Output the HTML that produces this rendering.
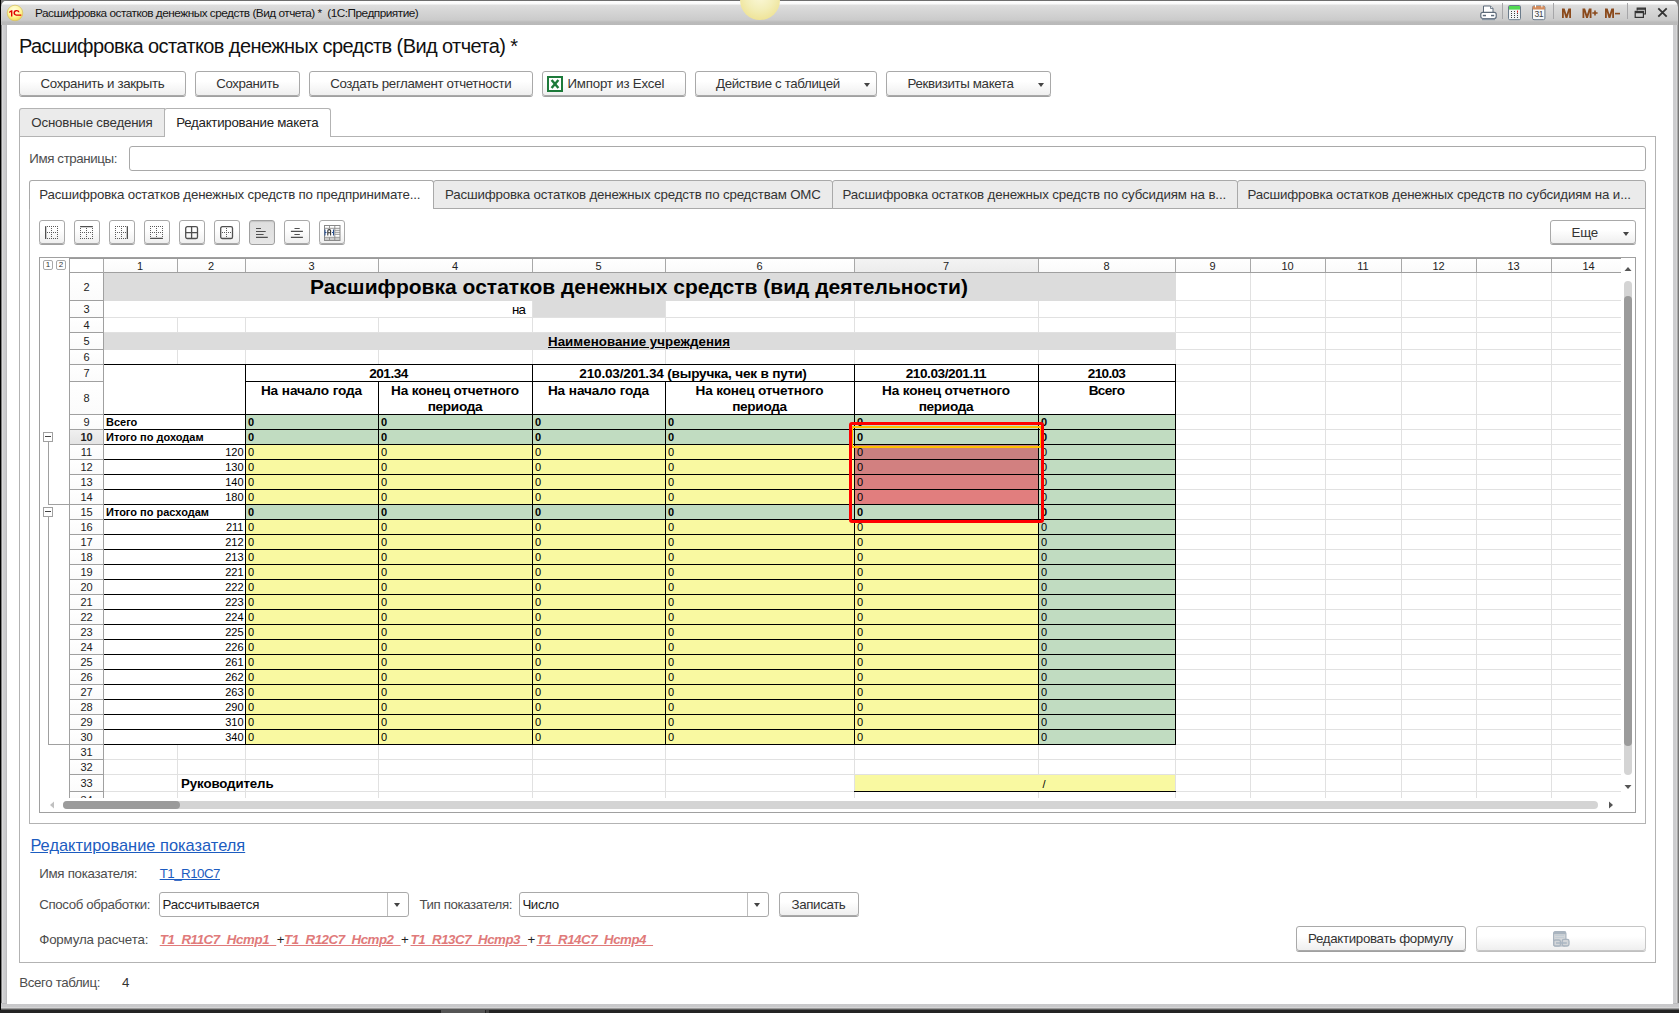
<!DOCTYPE html><html><head><meta charset="utf-8"><style>
html,body{margin:0;padding:0;}
body{width:1679px;height:1013px;position:relative;overflow:hidden;background:#232323;font-family:"Liberation Sans", sans-serif;}
.btn{position:absolute;box-sizing:border-box;border:1px solid #a9a9a9;border-radius:3px;background:linear-gradient(#ffffff 0%,#ffffff 40%,#efefef 100%);box-shadow:0 1px 0 #a0a0a0;}
.arr{position:absolute;width:0;height:0;border-left:3.5px solid transparent;border-right:3.5px solid transparent;border-top:4px solid #444;}
.fld{position:absolute;box-sizing:border-box;border:1px solid #a9a9a9;border-radius:3px;background:#fff;}
</style></head><body>
<div style="position:absolute;left:0px;top:0px;width:1679px;height:1013px;background:#232323;"></div>
<div style="position:absolute;left:0px;top:0px;width:1px;height:1010px;background:#000;"></div>
<div style="position:absolute;left:1px;top:0px;width:1678px;height:1010px;background:linear-gradient(90deg,#808080 0,#808080 1px,#e2e2e2 1px,#d0d0d2 2px,#c8c8ca 5px,#b4b4b6 6px,#b4b4b6 7px,transparent 7px);"></div>
<div style="position:absolute;left:1672px;top:0px;width:7px;height:1010px;background:linear-gradient(90deg,#b0b0b2 0,#cdcdcf 1px,#cdcdcf 4px,#e0e0e0 5px,#777 6px);"></div>
<div style="position:absolute;left:1px;top:1003px;width:1678px;height:7px;background:linear-gradient(#b0b0b2 0,#c8c8ca 1px,#c9c9cb 4px,#e0e0e0 5px,#5a5a5a 6px);"></div>
<div style="position:absolute;left:0px;top:1010px;width:1679px;height:3px;background:#232323;"></div>
<div style="position:absolute;left:441px;top:1010px;width:44px;height:3px;background:#555;"></div>
<div style="position:absolute;left:486px;top:1010px;width:3px;height:3px;background:#444;"></div>
<div style="position:absolute;left:1px;top:0px;width:9px;height:9px;background:#787878;"></div>
<div style="position:absolute;left:1669px;top:0px;width:10px;height:9px;background:#787878;"></div>
<div style="position:absolute;left:1px;top:0px;width:1677px;height:25px;background:linear-gradient(#6e6e6e 0,#6e6e6e 1px,#fdfdfd 1px,#fbfbfb 4px,#dedede 5px,#d7d7d7 10px,#cbcbcb 20px,#bbbbbb 22px,#b9b9b9 25px);border-top-left-radius:7px;border-top-right-radius:7px;"></div>
<div style="position:absolute;left:7px;top:25px;width:1666px;height:979px;background:#fff;"></div>
<div style="position:absolute;left:740px;top:-20px;width:40px;height:40px;border-radius:50%;background:radial-gradient(circle at 50% 40%,#fbf8d8 0,#f3eeb8 45%,#efe49a 75%,#f0d468 92%,rgba(240,205,90,0.6) 100%);"></div>
<svg style="position:absolute;left:6px;top:4px" width="18" height="18" viewBox="0 0 18 18"><defs><radialGradient id="lg" cx="45%" cy="30%" r="70%"><stop offset="0" stop-color="#fffde0"/><stop offset="0.6" stop-color="#fff79a"/><stop offset="1" stop-color="#f4d850"/></radialGradient></defs><circle cx="9" cy="9" r="7.8" fill="url(#lg)" stroke="#d9c468" stroke-width="0.8"/><path d="M3.3 7.6 L5.3 6.2 H6.4 V12.4 H5 V8 L3.3 8.9 Z" fill="#e00000"/><path d="M13.6 8.2 A3.1 2.9 0 1 0 10.2 11.7 H15.3 V10.5 H10.4 A1.7 1.6 0 1 1 12.2 8.2 Z" fill="#e00000"/></svg>
<div style="position:absolute;left:35px;top:8px;font-size:11.8px;color:#151515;font-weight:400;white-space:nowrap;line-height:1;"><span id="t0" style="letter-spacing:-0.493px;">Расшифровка остатков денежных средств (Вид отчета) *&nbsp; (1С:Предприятие)</span></div>
<svg style="position:absolute;left:1480px;top:5px" width="17" height="16" viewBox="0 0 17 16"><path d="M3.5 1 H10.5 L13 3.5 V8 H3.5 Z" fill="#fff" stroke="#5d6b7a" stroke-width="1"/><path d="M10.5 1 V3.5 H13" fill="#dfe3e8" stroke="#5d6b7a" stroke-width="0.8"/><rect x="0.8" y="7.3" width="15.4" height="6.2" rx="2" fill="#fff" stroke="#5d6b7a" stroke-width="1.2"/><rect x="2.8" y="9.8" width="3.2" height="1.5" fill="#5d6b7a"/><rect x="11" y="9.8" width="3.2" height="1.5" fill="#5d6b7a"/><rect x="2" y="13.6" width="13" height="1.6" fill="#8794a2"/></svg>
<div style="position:absolute;left:1502px;top:3px;width:1px;height:16px;background:#a6a6a8;"></div>
<svg style="position:absolute;left:1508px;top:5px" width="14" height="16" viewBox="0 0 14 16"><rect x="0.5" y="0.5" width="12" height="14.2" rx="1.2" fill="#f2f4f6" stroke="#6b7b8b" stroke-width="1"/><rect x="1" y="1" width="11" height="3.6" fill="#52d952"/><rect x="3" y="6" width="1" height="1" fill="#404040"/><rect x="3" y="8" width="1" height="1" fill="#404040"/><rect x="3" y="10" width="1" height="1" fill="#404040"/><rect x="3" y="12" width="1" height="1" fill="#404040"/><rect x="6" y="6" width="1" height="1" fill="#404040"/><rect x="6" y="8" width="1" height="1" fill="#404040"/><rect x="6" y="10" width="1" height="1" fill="#404040"/><rect x="6" y="12" width="1" height="1" fill="#404040"/><rect x="9" y="8" width="1" height="1" fill="#404040"/><rect x="9" y="10" width="1" height="1" fill="#404040"/><rect x="9" y="12" width="1" height="1" fill="#404040"/><rect x="9" y="5.6" width="1" height="2" fill="#e02020"/></svg>
<svg style="position:absolute;left:1532px;top:5px" width="14" height="16" viewBox="0 0 14 16"><rect x="0.5" y="1" width="12.4" height="13.7" rx="1.5" fill="#f8fafc" stroke="#6b7b8b" stroke-width="1"/><path d="M0.5 4.6 V2.5 Q0.5 1 2 1 H11.4 Q12.9 1 12.9 2.5 V4.6 Z" fill="#d48c5c"/><rect x="3" y="0" width="1" height="2.4" fill="#fff"/><rect x="9.4" y="0" width="1" height="2.4" fill="#fff"/><text x="2.4" y="12.4" font-family="Liberation Sans" font-size="8.6" fill="#404040" letter-spacing="-0.4">31</text></svg>
<div style="position:absolute;left:1553px;top:3px;width:1px;height:16px;background:#a6a6a8;"></div>
<svg style="position:absolute;left:1561px;top:7px" width="62" height="12" viewBox="0 0 62 12"><path d="M1 11 V1.5 H3.6 L5.5 7.5 L7.4 1.5 H10 V11 H8.2 V5 L6.4 11 H4.6 L2.8 5 V11 Z" fill="#8b4a1c"/><path d="M21.5 11 V1.5 H24.1 L26 7.5 L27.9 1.5 H30.5 V11 H28.7 V5 L26.9 11 H25.1 L23.3 5 V11 Z" fill="#8b4a1c"/><path d="M31.3 6 H36.6 M34 3.5 V8.5" stroke="#8b4a1c" stroke-width="1.6"/><path d="M44 11 V1.5 H46.6 L48.5 7.5 L50.4 1.5 H53 V11 H51.2 V5 L49.4 11 H47.6 L45.8 5 V11 Z" fill="#8b4a1c"/><path d="M54 6.6 H59" stroke="#8b4a1c" stroke-width="1.6"/></svg>
<div style="position:absolute;left:1627px;top:3px;width:1px;height:16px;background:#a6a6a8;"></div>
<svg style="position:absolute;left:1634px;top:7px" width="13" height="12" viewBox="0 0 13 12"><path d="M3.2 3.5 V1.2 H11.4 V7 H9.6" fill="none" stroke="#333" stroke-width="1.2"/><rect x="1.2" y="4.4" width="8.2" height="6" fill="none" stroke="#333" stroke-width="1.2"/><rect x="1.2" y="4.4" width="8.2" height="1.8" fill="#333"/><rect x="3.2" y="1.2" width="8.2" height="1.6" fill="#333"/></svg>
<svg style="position:absolute;left:1657px;top:7px" width="11" height="11" viewBox="0 0 11 11"><path d="M1.3 1.3 L9.7 9.7 M9.7 1.3 L1.3 9.7" stroke="#333" stroke-width="1.8"/></svg>
<div style="position:absolute;left:19px;top:36px;font-size:20px;color:#111;font-weight:400;white-space:nowrap;line-height:1;"><span id="t1" style="letter-spacing:-0.598px;">Расшифровка остатков денежных средств (Вид отчета) *</span></div>
<div class="btn" style="left:19px;top:71px;width:167px;height:25px"></div>
<div style="position:absolute;left:40.5px;top:77px;font-size:13.3px;color:#333;font-weight:400;white-space:nowrap;line-height:1;"><span id="t2" style="letter-spacing:-0.330px;">Сохранить и закрыть</span></div>
<div class="btn" style="left:195px;top:71px;width:105px;height:25px"></div>
<div style="position:absolute;left:216.2px;top:77px;font-size:13.3px;color:#333;font-weight:400;white-space:nowrap;line-height:1;"><span id="t3" style="letter-spacing:-0.398px;">Сохранить</span></div>
<div class="btn" style="left:309px;top:71px;width:224px;height:25px"></div>
<div style="position:absolute;left:330.2px;top:77px;font-size:13.3px;color:#333;font-weight:400;white-space:nowrap;line-height:1;"><span id="t4" style="letter-spacing:-0.331px;">Создать регламент отчетности</span></div>
<div class="btn" style="left:542px;top:71px;width:144px;height:25px"></div>
<div style="position:absolute;left:567.5px;top:77px;font-size:13.3px;color:#333;font-weight:400;white-space:nowrap;line-height:1;"><span id="t5" style="letter-spacing:-0.215px;">Импорт из Excel</span></div>
<svg style="position:absolute;left:547px;top:76px" width="16" height="16" viewBox="0 0 16 16"><rect x="1" y="1" width="14" height="14" fill="#fff" stroke="#1d7a3a" stroke-width="2"/><path d="M4.6 4 L11.4 12 M11.4 4 L4.6 12" stroke="#1d7a3a" stroke-width="2.4"/></svg>
<div class="btn" style="left:695px;top:71px;width:182px;height:25px"></div>
<div class="arr" style="left:864px;top:83px"></div>
<div style="position:absolute;left:716px;top:77px;font-size:13.3px;color:#333;font-weight:400;white-space:nowrap;line-height:1;"><span id="t6" style="letter-spacing:-0.344px;">Действие с таблицей</span></div>
<div class="btn" style="left:886px;top:71px;width:165px;height:25px"></div>
<div class="arr" style="left:1038px;top:83px"></div>
<div style="position:absolute;left:907.5px;top:77px;font-size:13.3px;color:#333;font-weight:400;white-space:nowrap;line-height:1;"><span id="t7" style="letter-spacing:-0.354px;">Реквизиты макета</span></div>
<div style="position:absolute;left:19px;top:136px;width:1637px;height:827px;box-sizing:border-box;border:1px solid #b3b3b3;background:#fff;"></div>
<div style="position:absolute;left:19px;top:108px;width:146px;height:28px;box-sizing:border-box;border:1px solid #b3b3b3;border-bottom:none;border-top-left-radius:3px;background:#ebebeb;"></div>
<div style="position:absolute;left:164px;top:108px;width:167px;height:29px;box-sizing:border-box;border:1px solid #b3b3b3;border-bottom:none;border-top-left-radius:3px;border-top-right-radius:3px;background:#fff;"></div>
<div style="position:absolute;left:31.3px;top:116px;font-size:13.3px;color:#333;font-weight:400;white-space:nowrap;line-height:1;"><span id="t8" style="letter-spacing:-0.193px;">Основные сведения</span></div>
<div style="position:absolute;left:176.2px;top:116px;font-size:13.3px;color:#222;font-weight:400;white-space:nowrap;line-height:1;"><span id="t9" style="letter-spacing:-0.266px;">Редактирование макета</span></div>
<div style="position:absolute;left:29.3px;top:152px;font-size:13.3px;color:#4d4d4d;font-weight:400;white-space:nowrap;line-height:1;"><span id="t10" style="letter-spacing:-0.382px;">Имя страницы:</span></div>
<div class="fld" style="left:129px;top:146px;width:1517px;height:25px"></div>
<div style="position:absolute;left:29px;top:208px;width:1617px;height:616px;box-sizing:border-box;border:1px solid #b3b3b3;background:#fff;"></div>
<div style="position:absolute;left:29px;top:180px;width:405px;height:29px;box-sizing:border-box;border:1px solid #a9a9a9;border-bottom:none;border-top-left-radius:3px;border-top-right-radius:3px;background:#fff;"></div>
<div style="position:absolute;left:39.3px;top:188px;font-size:13.3px;color:#333;font-weight:400;white-space:nowrap;line-height:1;"><span id="t11" style="letter-spacing:-0.181px;">Расшифровка остатков денежных средств по предпринимате...</span></div>
<div style="position:absolute;left:433px;top:180px;width:400px;height:29px;box-sizing:border-box;border:1px solid #a9a9a9;border-top-left-radius:3px;border-top-right-radius:3px;background:#ebebeb;"></div>
<div style="position:absolute;left:444.9px;top:188px;font-size:13.3px;color:#333;font-weight:400;white-space:nowrap;line-height:1;"><span id="t12" style="letter-spacing:-0.156px;">Расшифровка остатков денежных средств по средствам ОМС</span></div>
<div style="position:absolute;left:832px;top:180px;width:406px;height:29px;box-sizing:border-box;border:1px solid #a9a9a9;border-top-left-radius:3px;border-top-right-radius:3px;background:#ebebeb;"></div>
<div style="position:absolute;left:842.5px;top:188px;font-size:13.3px;color:#333;font-weight:400;white-space:nowrap;line-height:1;"><span id="t13" style="letter-spacing:-0.133px;">Расшифровка остатков денежных средств по субсидиям на в...</span></div>
<div style="position:absolute;left:1237px;top:180px;width:409px;height:29px;box-sizing:border-box;border:1px solid #a9a9a9;border-top-left-radius:3px;border-top-right-radius:3px;background:#ebebeb;"></div>
<div style="position:absolute;left:1247.4px;top:188px;font-size:13.3px;color:#333;font-weight:400;white-space:nowrap;line-height:1;"><span id="t14" style="letter-spacing:-0.141px;">Расшифровка остатков денежных средств по субсидиям на и...</span></div>
<div style="position:absolute;left:30px;top:208px;width:403px;height:1px;background:#fff;"></div>
<div class="btn" style="left:39px;top:220px;width:26px;height:24px"></div>
<div class="btn" style="left:74px;top:220px;width:26px;height:24px"></div>
<div class="btn" style="left:109px;top:220px;width:26px;height:24px"></div>
<div class="btn" style="left:144px;top:220px;width:26px;height:24px"></div>
<div class="btn" style="left:179px;top:220px;width:26px;height:24px"></div>
<div class="btn" style="left:214px;top:220px;width:26px;height:24px"></div>
<div class="btn" style="left:249px;top:220px;width:26px;height:25px;background:linear-gradient(#dedede,#e6e6e6);box-shadow:inset 0 1px 1px rgba(0,0,0,0.12);border-color:#a0a0a0"></div>
<div class="btn" style="left:284px;top:220px;width:26px;height:24px"></div>
<div class="btn" style="left:319px;top:220px;width:26px;height:24px"></div>
<svg style="position:absolute;left:45px;top:226px" width="14" height="14" viewBox="0 0 14 14"><rect x="6" y="12" width="1" height="1" fill="#5a5a5a"/><rect x="12" y="4" width="1" height="1" fill="#5a5a5a"/><rect x="4" y="0" width="1" height="1" fill="#5a5a5a"/><rect x="12" y="10" width="1" height="1" fill="#5a5a5a"/><rect x="4" y="6" width="1" height="1" fill="#5a5a5a"/><rect x="4" y="12" width="1" height="1" fill="#5a5a5a"/><rect x="8" y="0" width="1" height="1" fill="#5a5a5a"/><rect x="10" y="0" width="1" height="1" fill="#5a5a5a"/><rect x="10" y="6" width="1" height="1" fill="#5a5a5a"/><rect x="8" y="6" width="1" height="1" fill="#5a5a5a"/><rect x="8" y="12" width="1" height="1" fill="#5a5a5a"/><rect x="10" y="12" width="1" height="1" fill="#5a5a5a"/><rect x="6" y="2" width="1" height="1" fill="#5a5a5a"/><rect x="6" y="8" width="1" height="1" fill="#5a5a5a"/><rect x="12" y="0" width="1" height="1" fill="#5a5a5a"/><rect x="12" y="6" width="1" height="1" fill="#5a5a5a"/><rect x="12" y="12" width="1" height="1" fill="#5a5a5a"/><rect x="6" y="4" width="1" height="1" fill="#5a5a5a"/><rect x="6" y="10" width="1" height="1" fill="#5a5a5a"/><rect x="12" y="2" width="1" height="1" fill="#5a5a5a"/><rect x="12" y="8" width="1" height="1" fill="#5a5a5a"/><rect x="2" y="0" width="1" height="1" fill="#5a5a5a"/><rect x="2" y="6" width="1" height="1" fill="#5a5a5a"/><rect x="2" y="12" width="1" height="1" fill="#5a5a5a"/><rect x="6" y="0" width="1" height="1" fill="#5a5a5a"/><rect x="6" y="6" width="1" height="1" fill="#5a5a5a"/><rect x="0" y="0" width="1.3" height="13" rx="0.6" fill="#505050"/></svg>
<svg style="position:absolute;left:80px;top:226px" width="14" height="14" viewBox="0 0 14 14"><rect x="6" y="12" width="1" height="1" fill="#5a5a5a"/><rect x="12" y="4" width="1" height="1" fill="#5a5a5a"/><rect x="12" y="10" width="1" height="1" fill="#5a5a5a"/><rect x="4" y="6" width="1" height="1" fill="#5a5a5a"/><rect x="4" y="12" width="1" height="1" fill="#5a5a5a"/><rect x="0" y="2" width="1" height="1" fill="#5a5a5a"/><rect x="10" y="6" width="1" height="1" fill="#5a5a5a"/><rect x="8" y="6" width="1" height="1" fill="#5a5a5a"/><rect x="8" y="12" width="1" height="1" fill="#5a5a5a"/><rect x="0" y="8" width="1" height="1" fill="#5a5a5a"/><rect x="10" y="12" width="1" height="1" fill="#5a5a5a"/><rect x="6" y="2" width="1" height="1" fill="#5a5a5a"/><rect x="6" y="8" width="1" height="1" fill="#5a5a5a"/><rect x="12" y="6" width="1" height="1" fill="#5a5a5a"/><rect x="12" y="12" width="1" height="1" fill="#5a5a5a"/><rect x="0" y="4" width="1" height="1" fill="#5a5a5a"/><rect x="0" y="10" width="1" height="1" fill="#5a5a5a"/><rect x="6" y="4" width="1" height="1" fill="#5a5a5a"/><rect x="6" y="10" width="1" height="1" fill="#5a5a5a"/><rect x="12" y="2" width="1" height="1" fill="#5a5a5a"/><rect x="12" y="8" width="1" height="1" fill="#5a5a5a"/><rect x="0" y="6" width="1" height="1" fill="#5a5a5a"/><rect x="0" y="12" width="1" height="1" fill="#5a5a5a"/><rect x="2" y="6" width="1" height="1" fill="#5a5a5a"/><rect x="2" y="12" width="1" height="1" fill="#5a5a5a"/><rect x="6" y="6" width="1" height="1" fill="#5a5a5a"/><rect x="0" y="0" width="13" height="1.3" rx="0.6" fill="#505050"/></svg>
<svg style="position:absolute;left:115px;top:226px" width="14" height="14" viewBox="0 0 14 14"><rect x="6" y="12" width="1" height="1" fill="#5a5a5a"/><rect x="4" y="0" width="1" height="1" fill="#5a5a5a"/><rect x="4" y="6" width="1" height="1" fill="#5a5a5a"/><rect x="4" y="12" width="1" height="1" fill="#5a5a5a"/><rect x="8" y="0" width="1" height="1" fill="#5a5a5a"/><rect x="0" y="2" width="1" height="1" fill="#5a5a5a"/><rect x="10" y="0" width="1" height="1" fill="#5a5a5a"/><rect x="10" y="6" width="1" height="1" fill="#5a5a5a"/><rect x="8" y="6" width="1" height="1" fill="#5a5a5a"/><rect x="8" y="12" width="1" height="1" fill="#5a5a5a"/><rect x="0" y="8" width="1" height="1" fill="#5a5a5a"/><rect x="10" y="12" width="1" height="1" fill="#5a5a5a"/><rect x="6" y="2" width="1" height="1" fill="#5a5a5a"/><rect x="6" y="8" width="1" height="1" fill="#5a5a5a"/><rect x="0" y="4" width="1" height="1" fill="#5a5a5a"/><rect x="0" y="10" width="1" height="1" fill="#5a5a5a"/><rect x="6" y="4" width="1" height="1" fill="#5a5a5a"/><rect x="6" y="10" width="1" height="1" fill="#5a5a5a"/><rect x="0" y="0" width="1" height="1" fill="#5a5a5a"/><rect x="2" y="0" width="1" height="1" fill="#5a5a5a"/><rect x="0" y="6" width="1" height="1" fill="#5a5a5a"/><rect x="0" y="12" width="1" height="1" fill="#5a5a5a"/><rect x="2" y="6" width="1" height="1" fill="#5a5a5a"/><rect x="2" y="12" width="1" height="1" fill="#5a5a5a"/><rect x="6" y="0" width="1" height="1" fill="#5a5a5a"/><rect x="6" y="6" width="1" height="1" fill="#5a5a5a"/><rect x="11.7" y="0" width="1.3" height="13" rx="0.6" fill="#505050"/></svg>
<svg style="position:absolute;left:150px;top:226px" width="14" height="14" viewBox="0 0 14 14"><rect x="12" y="4" width="1" height="1" fill="#5a5a5a"/><rect x="4" y="0" width="1" height="1" fill="#5a5a5a"/><rect x="12" y="10" width="1" height="1" fill="#5a5a5a"/><rect x="4" y="6" width="1" height="1" fill="#5a5a5a"/><rect x="8" y="0" width="1" height="1" fill="#5a5a5a"/><rect x="0" y="2" width="1" height="1" fill="#5a5a5a"/><rect x="10" y="0" width="1" height="1" fill="#5a5a5a"/><rect x="10" y="6" width="1" height="1" fill="#5a5a5a"/><rect x="8" y="6" width="1" height="1" fill="#5a5a5a"/><rect x="0" y="8" width="1" height="1" fill="#5a5a5a"/><rect x="6" y="2" width="1" height="1" fill="#5a5a5a"/><rect x="6" y="8" width="1" height="1" fill="#5a5a5a"/><rect x="12" y="0" width="1" height="1" fill="#5a5a5a"/><rect x="12" y="6" width="1" height="1" fill="#5a5a5a"/><rect x="0" y="4" width="1" height="1" fill="#5a5a5a"/><rect x="0" y="10" width="1" height="1" fill="#5a5a5a"/><rect x="6" y="4" width="1" height="1" fill="#5a5a5a"/><rect x="6" y="10" width="1" height="1" fill="#5a5a5a"/><rect x="12" y="2" width="1" height="1" fill="#5a5a5a"/><rect x="12" y="8" width="1" height="1" fill="#5a5a5a"/><rect x="0" y="0" width="1" height="1" fill="#5a5a5a"/><rect x="2" y="0" width="1" height="1" fill="#5a5a5a"/><rect x="0" y="6" width="1" height="1" fill="#5a5a5a"/><rect x="2" y="6" width="1" height="1" fill="#5a5a5a"/><rect x="6" y="0" width="1" height="1" fill="#5a5a5a"/><rect x="6" y="6" width="1" height="1" fill="#5a5a5a"/><rect x="0" y="11.7" width="13" height="1.3" rx="0.6" fill="#505050"/></svg>
<svg style="position:absolute;left:185px;top:226px" width="14" height="14" viewBox="0 0 14 14"><rect x="0.7" y="0.7" width="11.8" height="11.8" rx="1.6" fill="none" stroke="#505050" stroke-width="1.3"/><path d="M6.6 0.7 V12.5 M0.7 6.6 H12.5" stroke="#505050" stroke-width="1.3"/></svg>
<svg style="position:absolute;left:220px;top:226px" width="14" height="14" viewBox="0 0 14 14"><rect x="0.7" y="0.7" width="11.8" height="11.8" rx="1.6" fill="none" stroke="#505050" stroke-width="1.3"/><rect x="2" y="6" width="1" height="1" fill="#5a5a5a"/><rect x="6" y="2" width="1" height="1" fill="#5a5a5a"/><rect x="4" y="6" width="1" height="1" fill="#5a5a5a"/><rect x="6" y="4" width="1" height="1" fill="#5a5a5a"/><rect x="6" y="6" width="1" height="1" fill="#5a5a5a"/><rect x="6" y="6" width="1" height="1" fill="#5a5a5a"/><rect x="8" y="6" width="1" height="1" fill="#5a5a5a"/><rect x="6" y="8" width="1" height="1" fill="#5a5a5a"/><rect x="10" y="6" width="1" height="1" fill="#5a5a5a"/><rect x="6" y="10" width="1" height="1" fill="#5a5a5a"/></svg>
<svg style="position:absolute;left:255px;top:226px" width="14" height="14" viewBox="0 0 14 14"><path d="M1 2.5 H6 M1 5.5 H10.7 M1 8.5 H8.6 M1 11.4 H12.8" stroke="#505050" stroke-width="1.1"/></svg>
<svg style="position:absolute;left:290px;top:226px" width="14" height="14" viewBox="0 0 14 14"><path d="M4.5 2.5 H9.7 M0.9 5.4 H12.9 M4.4 8.5 H9.8 M0.9 11.4 H12.9" stroke="#505050" stroke-width="1.1"/></svg>
<svg style="position:absolute;left:324px;top:225px" width="17" height="16" viewBox="0 0 17 16"><rect x="0.5" y="0.5" width="15.5" height="15" fill="#fff" stroke="#8a8a8a" stroke-width="1"/><path d="M0.5 3.3 H16 M10.8 5.3 H16 M10.8 7.3 H16 M10.8 9.3 H16 M0.5 12.3 H16 M0.5 14 H16 M5.5 0.5 V3.3 M5.5 12.3 V15.5 M10.8 0.5 V15.5" stroke="#8a8a8a" stroke-width="0.9"/><path d="M1 4.5 V10.5 M1 7.5 H2.5 M9.5 4.5 V10.5 M8 7.5 H9.5" stroke="#2a5090" stroke-width="1.1"/><path d="M3.8 10.5 V5.8 Q3.8 4.6 5.2 4.6 Q6.6 4.6 6.6 5.8 V10.5 M3.8 7.8 H6.6" fill="none" stroke="#333" stroke-width="1.1"/></svg>
<div class="btn" style="left:1550px;top:220px;width:86px;height:24px"></div>
<div class="arr" style="left:1623px;top:232px"></div>
<div style="position:absolute;left:1571.4px;top:226px;font-size:13.3px;color:#333;font-weight:400;white-space:nowrap;line-height:1;"><span id="t15" style="letter-spacing:-0.121px;">Еще</span></div>
<div style="position:absolute;left:39px;top:257px;width:1597px;height:556px;box-sizing:border-box;border:1px solid #a0a0a0;background:#fff;"></div>
<div style="position:absolute;left:69px;top:258px;width:1552px;height:1px;background:#9a9a9a;"></div>
<div style="position:absolute;left:0;top:0;width:1679px;height:1013px;clip-path:inset(273px 58px 215px 104px);">
<div style="position:absolute;left:177px;top:273px;width:1px;height:525px;background:#e1e1e1;"></div>
<div style="position:absolute;left:245px;top:273px;width:1px;height:525px;background:#e1e1e1;"></div>
<div style="position:absolute;left:378px;top:273px;width:1px;height:525px;background:#e1e1e1;"></div>
<div style="position:absolute;left:532px;top:273px;width:1px;height:525px;background:#e1e1e1;"></div>
<div style="position:absolute;left:665px;top:273px;width:1px;height:525px;background:#e1e1e1;"></div>
<div style="position:absolute;left:854px;top:273px;width:1px;height:525px;background:#e1e1e1;"></div>
<div style="position:absolute;left:1038px;top:273px;width:1px;height:525px;background:#e1e1e1;"></div>
<div style="position:absolute;left:1175px;top:273px;width:1px;height:525px;background:#e1e1e1;"></div>
<div style="position:absolute;left:1250px;top:273px;width:1px;height:525px;background:#e1e1e1;"></div>
<div style="position:absolute;left:1325px;top:273px;width:1px;height:525px;background:#e1e1e1;"></div>
<div style="position:absolute;left:1401px;top:273px;width:1px;height:525px;background:#e1e1e1;"></div>
<div style="position:absolute;left:1476px;top:273px;width:1px;height:525px;background:#e1e1e1;"></div>
<div style="position:absolute;left:1551px;top:273px;width:1px;height:525px;background:#e1e1e1;"></div>
<div style="position:absolute;left:1626px;top:273px;width:1px;height:525px;background:#e1e1e1;"></div>
<div style="position:absolute;left:103px;top:300px;width:1518px;height:1px;background:#e1e1e1;"></div>
<div style="position:absolute;left:103px;top:317px;width:1518px;height:1px;background:#e1e1e1;"></div>
<div style="position:absolute;left:103px;top:332px;width:1518px;height:1px;background:#e1e1e1;"></div>
<div style="position:absolute;left:103px;top:349px;width:1518px;height:1px;background:#e1e1e1;"></div>
<div style="position:absolute;left:103px;top:364px;width:1518px;height:1px;background:#e1e1e1;"></div>
<div style="position:absolute;left:103px;top:381px;width:1518px;height:1px;background:#e1e1e1;"></div>
<div style="position:absolute;left:103px;top:414px;width:1518px;height:1px;background:#e1e1e1;"></div>
<div style="position:absolute;left:103px;top:429px;width:1518px;height:1px;background:#e1e1e1;"></div>
<div style="position:absolute;left:103px;top:444px;width:1518px;height:1px;background:#e1e1e1;"></div>
<div style="position:absolute;left:103px;top:459px;width:1518px;height:1px;background:#e1e1e1;"></div>
<div style="position:absolute;left:103px;top:474px;width:1518px;height:1px;background:#e1e1e1;"></div>
<div style="position:absolute;left:103px;top:489px;width:1518px;height:1px;background:#e1e1e1;"></div>
<div style="position:absolute;left:103px;top:504px;width:1518px;height:1px;background:#e1e1e1;"></div>
<div style="position:absolute;left:103px;top:519px;width:1518px;height:1px;background:#e1e1e1;"></div>
<div style="position:absolute;left:103px;top:534px;width:1518px;height:1px;background:#e1e1e1;"></div>
<div style="position:absolute;left:103px;top:549px;width:1518px;height:1px;background:#e1e1e1;"></div>
<div style="position:absolute;left:103px;top:564px;width:1518px;height:1px;background:#e1e1e1;"></div>
<div style="position:absolute;left:103px;top:579px;width:1518px;height:1px;background:#e1e1e1;"></div>
<div style="position:absolute;left:103px;top:594px;width:1518px;height:1px;background:#e1e1e1;"></div>
<div style="position:absolute;left:103px;top:609px;width:1518px;height:1px;background:#e1e1e1;"></div>
<div style="position:absolute;left:103px;top:624px;width:1518px;height:1px;background:#e1e1e1;"></div>
<div style="position:absolute;left:103px;top:639px;width:1518px;height:1px;background:#e1e1e1;"></div>
<div style="position:absolute;left:103px;top:654px;width:1518px;height:1px;background:#e1e1e1;"></div>
<div style="position:absolute;left:103px;top:669px;width:1518px;height:1px;background:#e1e1e1;"></div>
<div style="position:absolute;left:103px;top:684px;width:1518px;height:1px;background:#e1e1e1;"></div>
<div style="position:absolute;left:103px;top:699px;width:1518px;height:1px;background:#e1e1e1;"></div>
<div style="position:absolute;left:103px;top:714px;width:1518px;height:1px;background:#e1e1e1;"></div>
<div style="position:absolute;left:103px;top:729px;width:1518px;height:1px;background:#e1e1e1;"></div>
<div style="position:absolute;left:103px;top:744px;width:1518px;height:1px;background:#e1e1e1;"></div>
<div style="position:absolute;left:103px;top:759px;width:1518px;height:1px;background:#e1e1e1;"></div>
<div style="position:absolute;left:103px;top:774px;width:1518px;height:1px;background:#e1e1e1;"></div>
<div style="position:absolute;left:103px;top:791px;width:1518px;height:1px;background:#e1e1e1;"></div>
<div style="position:absolute;left:103px;top:806px;width:1518px;height:1px;background:#e1e1e1;"></div>
<div style="position:absolute;left:104px;top:273px;width:1072px;height:28px;background:#dcdcdc;"></div>
<div style="position:absolute;left:104px;top:301px;width:428px;height:16px;background:#fff;"></div>
<div style="position:absolute;left:533px;top:301px;width:132px;height:16px;background:#dcdcdc;"></div>
<div style="position:absolute;left:104px;top:333px;width:1072px;height:17px;background:#dcdcdc;"></div>
<div style="position:absolute;left:104px;top:365px;width:1072px;height:49px;background:#fff;"></div>
<div style="position:absolute;left:104px;top:415px;width:141px;height:14px;background:#fff;"></div>
<div style="position:absolute;left:246px;top:415px;width:132px;height:14px;background:#c1dcc1;"></div>
<div style="position:absolute;left:379px;top:415px;width:153px;height:14px;background:#c1dcc1;"></div>
<div style="position:absolute;left:533px;top:415px;width:132px;height:14px;background:#c1dcc1;"></div>
<div style="position:absolute;left:666px;top:415px;width:188px;height:14px;background:#c1dcc1;"></div>
<div style="position:absolute;left:855px;top:415px;width:183px;height:14px;background:#c1dcc1;"></div>
<div style="position:absolute;left:1039px;top:415px;width:136px;height:14px;background:#c1dcc1;"></div>
<div style="position:absolute;left:104px;top:430px;width:141px;height:14px;background:#fff;"></div>
<div style="position:absolute;left:246px;top:430px;width:132px;height:14px;background:#c1dcc1;"></div>
<div style="position:absolute;left:379px;top:430px;width:153px;height:14px;background:#c1dcc1;"></div>
<div style="position:absolute;left:533px;top:430px;width:132px;height:14px;background:#c1dcc1;"></div>
<div style="position:absolute;left:666px;top:430px;width:188px;height:14px;background:#c1dcc1;"></div>
<div style="position:absolute;left:855px;top:430px;width:183px;height:14px;background:#c1dcc1;"></div>
<div style="position:absolute;left:1039px;top:430px;width:136px;height:14px;background:#c1dcc1;"></div>
<div style="position:absolute;left:104px;top:445px;width:141px;height:14px;background:#fff;"></div>
<div style="position:absolute;left:246px;top:445px;width:132px;height:14px;background:#f9f9a1;"></div>
<div style="position:absolute;left:379px;top:445px;width:153px;height:14px;background:#f9f9a1;"></div>
<div style="position:absolute;left:533px;top:445px;width:132px;height:14px;background:#f9f9a1;"></div>
<div style="position:absolute;left:666px;top:445px;width:188px;height:14px;background:#f9f9a1;"></div>
<div style="position:absolute;left:855px;top:445px;width:183px;height:14px;background:#f9f9a1;"></div>
<div style="position:absolute;left:1039px;top:445px;width:136px;height:14px;background:#c1dcc1;"></div>
<div style="position:absolute;left:104px;top:460px;width:141px;height:14px;background:#fff;"></div>
<div style="position:absolute;left:246px;top:460px;width:132px;height:14px;background:#f9f9a1;"></div>
<div style="position:absolute;left:379px;top:460px;width:153px;height:14px;background:#f9f9a1;"></div>
<div style="position:absolute;left:533px;top:460px;width:132px;height:14px;background:#f9f9a1;"></div>
<div style="position:absolute;left:666px;top:460px;width:188px;height:14px;background:#f9f9a1;"></div>
<div style="position:absolute;left:855px;top:460px;width:183px;height:14px;background:#f9f9a1;"></div>
<div style="position:absolute;left:1039px;top:460px;width:136px;height:14px;background:#c1dcc1;"></div>
<div style="position:absolute;left:104px;top:475px;width:141px;height:14px;background:#fff;"></div>
<div style="position:absolute;left:246px;top:475px;width:132px;height:14px;background:#f9f9a1;"></div>
<div style="position:absolute;left:379px;top:475px;width:153px;height:14px;background:#f9f9a1;"></div>
<div style="position:absolute;left:533px;top:475px;width:132px;height:14px;background:#f9f9a1;"></div>
<div style="position:absolute;left:666px;top:475px;width:188px;height:14px;background:#f9f9a1;"></div>
<div style="position:absolute;left:855px;top:475px;width:183px;height:14px;background:#f9f9a1;"></div>
<div style="position:absolute;left:1039px;top:475px;width:136px;height:14px;background:#c1dcc1;"></div>
<div style="position:absolute;left:104px;top:490px;width:141px;height:14px;background:#fff;"></div>
<div style="position:absolute;left:246px;top:490px;width:132px;height:14px;background:#f9f9a1;"></div>
<div style="position:absolute;left:379px;top:490px;width:153px;height:14px;background:#f9f9a1;"></div>
<div style="position:absolute;left:533px;top:490px;width:132px;height:14px;background:#f9f9a1;"></div>
<div style="position:absolute;left:666px;top:490px;width:188px;height:14px;background:#f9f9a1;"></div>
<div style="position:absolute;left:855px;top:490px;width:183px;height:14px;background:#f9f9a1;"></div>
<div style="position:absolute;left:1039px;top:490px;width:136px;height:14px;background:#c1dcc1;"></div>
<div style="position:absolute;left:104px;top:505px;width:141px;height:14px;background:#fff;"></div>
<div style="position:absolute;left:246px;top:505px;width:132px;height:14px;background:#c1dcc1;"></div>
<div style="position:absolute;left:379px;top:505px;width:153px;height:14px;background:#c1dcc1;"></div>
<div style="position:absolute;left:533px;top:505px;width:132px;height:14px;background:#c1dcc1;"></div>
<div style="position:absolute;left:666px;top:505px;width:188px;height:14px;background:#c1dcc1;"></div>
<div style="position:absolute;left:855px;top:505px;width:183px;height:14px;background:#c1dcc1;"></div>
<div style="position:absolute;left:1039px;top:505px;width:136px;height:14px;background:#c1dcc1;"></div>
<div style="position:absolute;left:104px;top:520px;width:141px;height:14px;background:#fff;"></div>
<div style="position:absolute;left:246px;top:520px;width:132px;height:14px;background:#f9f9a1;"></div>
<div style="position:absolute;left:379px;top:520px;width:153px;height:14px;background:#f9f9a1;"></div>
<div style="position:absolute;left:533px;top:520px;width:132px;height:14px;background:#f9f9a1;"></div>
<div style="position:absolute;left:666px;top:520px;width:188px;height:14px;background:#f9f9a1;"></div>
<div style="position:absolute;left:855px;top:520px;width:183px;height:14px;background:#f9f9a1;"></div>
<div style="position:absolute;left:1039px;top:520px;width:136px;height:14px;background:#c1dcc1;"></div>
<div style="position:absolute;left:104px;top:535px;width:141px;height:14px;background:#fff;"></div>
<div style="position:absolute;left:246px;top:535px;width:132px;height:14px;background:#f9f9a1;"></div>
<div style="position:absolute;left:379px;top:535px;width:153px;height:14px;background:#f9f9a1;"></div>
<div style="position:absolute;left:533px;top:535px;width:132px;height:14px;background:#f9f9a1;"></div>
<div style="position:absolute;left:666px;top:535px;width:188px;height:14px;background:#f9f9a1;"></div>
<div style="position:absolute;left:855px;top:535px;width:183px;height:14px;background:#f9f9a1;"></div>
<div style="position:absolute;left:1039px;top:535px;width:136px;height:14px;background:#c1dcc1;"></div>
<div style="position:absolute;left:104px;top:550px;width:141px;height:14px;background:#fff;"></div>
<div style="position:absolute;left:246px;top:550px;width:132px;height:14px;background:#f9f9a1;"></div>
<div style="position:absolute;left:379px;top:550px;width:153px;height:14px;background:#f9f9a1;"></div>
<div style="position:absolute;left:533px;top:550px;width:132px;height:14px;background:#f9f9a1;"></div>
<div style="position:absolute;left:666px;top:550px;width:188px;height:14px;background:#f9f9a1;"></div>
<div style="position:absolute;left:855px;top:550px;width:183px;height:14px;background:#f9f9a1;"></div>
<div style="position:absolute;left:1039px;top:550px;width:136px;height:14px;background:#c1dcc1;"></div>
<div style="position:absolute;left:104px;top:565px;width:141px;height:14px;background:#fff;"></div>
<div style="position:absolute;left:246px;top:565px;width:132px;height:14px;background:#f9f9a1;"></div>
<div style="position:absolute;left:379px;top:565px;width:153px;height:14px;background:#f9f9a1;"></div>
<div style="position:absolute;left:533px;top:565px;width:132px;height:14px;background:#f9f9a1;"></div>
<div style="position:absolute;left:666px;top:565px;width:188px;height:14px;background:#f9f9a1;"></div>
<div style="position:absolute;left:855px;top:565px;width:183px;height:14px;background:#f9f9a1;"></div>
<div style="position:absolute;left:1039px;top:565px;width:136px;height:14px;background:#c1dcc1;"></div>
<div style="position:absolute;left:104px;top:580px;width:141px;height:14px;background:#fff;"></div>
<div style="position:absolute;left:246px;top:580px;width:132px;height:14px;background:#f9f9a1;"></div>
<div style="position:absolute;left:379px;top:580px;width:153px;height:14px;background:#f9f9a1;"></div>
<div style="position:absolute;left:533px;top:580px;width:132px;height:14px;background:#f9f9a1;"></div>
<div style="position:absolute;left:666px;top:580px;width:188px;height:14px;background:#f9f9a1;"></div>
<div style="position:absolute;left:855px;top:580px;width:183px;height:14px;background:#f9f9a1;"></div>
<div style="position:absolute;left:1039px;top:580px;width:136px;height:14px;background:#c1dcc1;"></div>
<div style="position:absolute;left:104px;top:595px;width:141px;height:14px;background:#fff;"></div>
<div style="position:absolute;left:246px;top:595px;width:132px;height:14px;background:#f9f9a1;"></div>
<div style="position:absolute;left:379px;top:595px;width:153px;height:14px;background:#f9f9a1;"></div>
<div style="position:absolute;left:533px;top:595px;width:132px;height:14px;background:#f9f9a1;"></div>
<div style="position:absolute;left:666px;top:595px;width:188px;height:14px;background:#f9f9a1;"></div>
<div style="position:absolute;left:855px;top:595px;width:183px;height:14px;background:#f9f9a1;"></div>
<div style="position:absolute;left:1039px;top:595px;width:136px;height:14px;background:#c1dcc1;"></div>
<div style="position:absolute;left:104px;top:610px;width:141px;height:14px;background:#fff;"></div>
<div style="position:absolute;left:246px;top:610px;width:132px;height:14px;background:#f9f9a1;"></div>
<div style="position:absolute;left:379px;top:610px;width:153px;height:14px;background:#f9f9a1;"></div>
<div style="position:absolute;left:533px;top:610px;width:132px;height:14px;background:#f9f9a1;"></div>
<div style="position:absolute;left:666px;top:610px;width:188px;height:14px;background:#f9f9a1;"></div>
<div style="position:absolute;left:855px;top:610px;width:183px;height:14px;background:#f9f9a1;"></div>
<div style="position:absolute;left:1039px;top:610px;width:136px;height:14px;background:#c1dcc1;"></div>
<div style="position:absolute;left:104px;top:625px;width:141px;height:14px;background:#fff;"></div>
<div style="position:absolute;left:246px;top:625px;width:132px;height:14px;background:#f9f9a1;"></div>
<div style="position:absolute;left:379px;top:625px;width:153px;height:14px;background:#f9f9a1;"></div>
<div style="position:absolute;left:533px;top:625px;width:132px;height:14px;background:#f9f9a1;"></div>
<div style="position:absolute;left:666px;top:625px;width:188px;height:14px;background:#f9f9a1;"></div>
<div style="position:absolute;left:855px;top:625px;width:183px;height:14px;background:#f9f9a1;"></div>
<div style="position:absolute;left:1039px;top:625px;width:136px;height:14px;background:#c1dcc1;"></div>
<div style="position:absolute;left:104px;top:640px;width:141px;height:14px;background:#fff;"></div>
<div style="position:absolute;left:246px;top:640px;width:132px;height:14px;background:#f9f9a1;"></div>
<div style="position:absolute;left:379px;top:640px;width:153px;height:14px;background:#f9f9a1;"></div>
<div style="position:absolute;left:533px;top:640px;width:132px;height:14px;background:#f9f9a1;"></div>
<div style="position:absolute;left:666px;top:640px;width:188px;height:14px;background:#f9f9a1;"></div>
<div style="position:absolute;left:855px;top:640px;width:183px;height:14px;background:#f9f9a1;"></div>
<div style="position:absolute;left:1039px;top:640px;width:136px;height:14px;background:#c1dcc1;"></div>
<div style="position:absolute;left:104px;top:655px;width:141px;height:14px;background:#fff;"></div>
<div style="position:absolute;left:246px;top:655px;width:132px;height:14px;background:#f9f9a1;"></div>
<div style="position:absolute;left:379px;top:655px;width:153px;height:14px;background:#f9f9a1;"></div>
<div style="position:absolute;left:533px;top:655px;width:132px;height:14px;background:#f9f9a1;"></div>
<div style="position:absolute;left:666px;top:655px;width:188px;height:14px;background:#f9f9a1;"></div>
<div style="position:absolute;left:855px;top:655px;width:183px;height:14px;background:#f9f9a1;"></div>
<div style="position:absolute;left:1039px;top:655px;width:136px;height:14px;background:#c1dcc1;"></div>
<div style="position:absolute;left:104px;top:670px;width:141px;height:14px;background:#fff;"></div>
<div style="position:absolute;left:246px;top:670px;width:132px;height:14px;background:#f9f9a1;"></div>
<div style="position:absolute;left:379px;top:670px;width:153px;height:14px;background:#f9f9a1;"></div>
<div style="position:absolute;left:533px;top:670px;width:132px;height:14px;background:#f9f9a1;"></div>
<div style="position:absolute;left:666px;top:670px;width:188px;height:14px;background:#f9f9a1;"></div>
<div style="position:absolute;left:855px;top:670px;width:183px;height:14px;background:#f9f9a1;"></div>
<div style="position:absolute;left:1039px;top:670px;width:136px;height:14px;background:#c1dcc1;"></div>
<div style="position:absolute;left:104px;top:685px;width:141px;height:14px;background:#fff;"></div>
<div style="position:absolute;left:246px;top:685px;width:132px;height:14px;background:#f9f9a1;"></div>
<div style="position:absolute;left:379px;top:685px;width:153px;height:14px;background:#f9f9a1;"></div>
<div style="position:absolute;left:533px;top:685px;width:132px;height:14px;background:#f9f9a1;"></div>
<div style="position:absolute;left:666px;top:685px;width:188px;height:14px;background:#f9f9a1;"></div>
<div style="position:absolute;left:855px;top:685px;width:183px;height:14px;background:#f9f9a1;"></div>
<div style="position:absolute;left:1039px;top:685px;width:136px;height:14px;background:#c1dcc1;"></div>
<div style="position:absolute;left:104px;top:700px;width:141px;height:14px;background:#fff;"></div>
<div style="position:absolute;left:246px;top:700px;width:132px;height:14px;background:#f9f9a1;"></div>
<div style="position:absolute;left:379px;top:700px;width:153px;height:14px;background:#f9f9a1;"></div>
<div style="position:absolute;left:533px;top:700px;width:132px;height:14px;background:#f9f9a1;"></div>
<div style="position:absolute;left:666px;top:700px;width:188px;height:14px;background:#f9f9a1;"></div>
<div style="position:absolute;left:855px;top:700px;width:183px;height:14px;background:#f9f9a1;"></div>
<div style="position:absolute;left:1039px;top:700px;width:136px;height:14px;background:#c1dcc1;"></div>
<div style="position:absolute;left:104px;top:715px;width:141px;height:14px;background:#fff;"></div>
<div style="position:absolute;left:246px;top:715px;width:132px;height:14px;background:#f9f9a1;"></div>
<div style="position:absolute;left:379px;top:715px;width:153px;height:14px;background:#f9f9a1;"></div>
<div style="position:absolute;left:533px;top:715px;width:132px;height:14px;background:#f9f9a1;"></div>
<div style="position:absolute;left:666px;top:715px;width:188px;height:14px;background:#f9f9a1;"></div>
<div style="position:absolute;left:855px;top:715px;width:183px;height:14px;background:#f9f9a1;"></div>
<div style="position:absolute;left:1039px;top:715px;width:136px;height:14px;background:#c1dcc1;"></div>
<div style="position:absolute;left:104px;top:730px;width:141px;height:14px;background:#fff;"></div>
<div style="position:absolute;left:246px;top:730px;width:132px;height:14px;background:#f9f9a1;"></div>
<div style="position:absolute;left:379px;top:730px;width:153px;height:14px;background:#f9f9a1;"></div>
<div style="position:absolute;left:533px;top:730px;width:132px;height:14px;background:#f9f9a1;"></div>
<div style="position:absolute;left:666px;top:730px;width:188px;height:14px;background:#f9f9a1;"></div>
<div style="position:absolute;left:855px;top:730px;width:183px;height:14px;background:#f9f9a1;"></div>
<div style="position:absolute;left:1039px;top:730px;width:136px;height:14px;background:#c1dcc1;"></div>
<div style="position:absolute;left:855px;top:445px;width:183px;height:14px;background:#c98080;"></div>
<div style="position:absolute;left:855px;top:460px;width:183px;height:14px;background:#d28080;"></div>
<div style="position:absolute;left:855px;top:475px;width:183px;height:14px;background:#da7f7f;"></div>
<div style="position:absolute;left:855px;top:490px;width:183px;height:14px;background:#e17e7e;"></div>
<div style="position:absolute;left:855px;top:775px;width:320px;height:16px;background:#f9f9a1;"></div>
<div style="position:absolute;left:103px;top:364px;width:1073px;height:1px;background:#000;"></div>
<div style="position:absolute;left:245px;top:381px;width:931px;height:1px;background:#000;"></div>
<div style="position:absolute;left:103px;top:414px;width:1073px;height:1px;background:#000;"></div>
<div style="position:absolute;left:245px;top:364px;width:1px;height:51px;background:#000;"></div>
<div style="position:absolute;left:532px;top:364px;width:1px;height:51px;background:#000;"></div>
<div style="position:absolute;left:854px;top:364px;width:1px;height:51px;background:#000;"></div>
<div style="position:absolute;left:1038px;top:364px;width:1px;height:51px;background:#000;"></div>
<div style="position:absolute;left:1175px;top:364px;width:1px;height:51px;background:#000;"></div>
<div style="position:absolute;left:378px;top:381px;width:1px;height:34px;background:#000;"></div>
<div style="position:absolute;left:665px;top:381px;width:1px;height:34px;background:#000;"></div>
<div style="position:absolute;left:103px;top:429px;width:1073px;height:1px;background:#000;"></div>
<div style="position:absolute;left:103px;top:444px;width:1073px;height:1px;background:#000;"></div>
<div style="position:absolute;left:103px;top:459px;width:1073px;height:1px;background:#000;"></div>
<div style="position:absolute;left:103px;top:474px;width:1073px;height:1px;background:#000;"></div>
<div style="position:absolute;left:103px;top:489px;width:1073px;height:1px;background:#000;"></div>
<div style="position:absolute;left:103px;top:504px;width:1073px;height:1px;background:#000;"></div>
<div style="position:absolute;left:103px;top:519px;width:1073px;height:1px;background:#000;"></div>
<div style="position:absolute;left:103px;top:534px;width:1073px;height:1px;background:#000;"></div>
<div style="position:absolute;left:103px;top:549px;width:1073px;height:1px;background:#000;"></div>
<div style="position:absolute;left:103px;top:564px;width:1073px;height:1px;background:#000;"></div>
<div style="position:absolute;left:103px;top:579px;width:1073px;height:1px;background:#000;"></div>
<div style="position:absolute;left:103px;top:594px;width:1073px;height:1px;background:#000;"></div>
<div style="position:absolute;left:103px;top:609px;width:1073px;height:1px;background:#000;"></div>
<div style="position:absolute;left:103px;top:624px;width:1073px;height:1px;background:#000;"></div>
<div style="position:absolute;left:103px;top:639px;width:1073px;height:1px;background:#000;"></div>
<div style="position:absolute;left:103px;top:654px;width:1073px;height:1px;background:#000;"></div>
<div style="position:absolute;left:103px;top:669px;width:1073px;height:1px;background:#000;"></div>
<div style="position:absolute;left:103px;top:684px;width:1073px;height:1px;background:#000;"></div>
<div style="position:absolute;left:103px;top:699px;width:1073px;height:1px;background:#000;"></div>
<div style="position:absolute;left:103px;top:714px;width:1073px;height:1px;background:#000;"></div>
<div style="position:absolute;left:103px;top:729px;width:1073px;height:1px;background:#000;"></div>
<div style="position:absolute;left:103px;top:744px;width:1073px;height:1px;background:#000;"></div>
<div style="position:absolute;left:245px;top:414px;width:1px;height:331px;background:#000;"></div>
<div style="position:absolute;left:378px;top:414px;width:1px;height:331px;background:#000;"></div>
<div style="position:absolute;left:532px;top:414px;width:1px;height:331px;background:#000;"></div>
<div style="position:absolute;left:665px;top:414px;width:1px;height:331px;background:#000;"></div>
<div style="position:absolute;left:854px;top:414px;width:1px;height:331px;background:#000;"></div>
<div style="position:absolute;left:1038px;top:414px;width:1px;height:331px;background:#000;"></div>
<div style="position:absolute;left:1175px;top:414px;width:1px;height:331px;background:#000;"></div>
<div style="position:absolute;left:854px;top:791px;width:322px;height:1px;background:#000;"></div>
<div style="position:absolute;left:103px;top:276px;width:1072px;text-align:center;font-size:21px;color:#000;font-weight:700;white-space:nowrap;line-height:1;"><span id="t16" style="letter-spacing:0.011px;">Расшифровка остатков денежных средств (вид деятельности)</span></div>
<div style="position:absolute;left:103px;top:303px;width:422px;text-align:right;font-size:13.3px;color:#000;font-weight:400;white-space:nowrap;line-height:1;"><span id="t17" style="letter-spacing:-0.825px;">на</span></div>
<div style="position:absolute;left:103px;top:335px;width:1072px;text-align:center;font-size:13.3px;color:#000;font-weight:700;white-space:nowrap;line-height:1;text-decoration:underline;"><span id="t18" style="letter-spacing:0.046px;">Наименование учреждения</span></div>
<div style="position:absolute;left:245px;top:367px;width:287px;text-align:center;font-size:13.6px;color:#000;font-weight:700;white-space:nowrap;line-height:1;"><span id="t19" style="letter-spacing:-0.496px;">201.34</span></div>
<div style="position:absolute;left:532px;top:367px;width:322px;text-align:center;font-size:13.6px;color:#000;font-weight:700;white-space:nowrap;line-height:1;"><span id="t20" style="letter-spacing:-0.201px;">210.03/201.34 (выручка, чек в пути)</span></div>
<div style="position:absolute;left:854px;top:367px;width:184px;text-align:center;font-size:13.6px;color:#000;font-weight:700;white-space:nowrap;line-height:1;"><span id="t21" style="letter-spacing:-0.438px;">210.03/201.11</span></div>
<div style="position:absolute;left:1038px;top:367px;width:137px;text-align:center;font-size:13.6px;color:#000;font-weight:700;white-space:nowrap;line-height:1;"><span id="t22" style="letter-spacing:-0.680px;">210.03</span></div>
<div style="position:absolute;left:245px;top:384px;width:133px;text-align:center;font-size:13.6px;color:#000;font-weight:700;white-space:nowrap;line-height:1;"><span id="t23" style="letter-spacing:-0.084px;">На начало года</span></div>
<div style="position:absolute;left:378px;top:384px;width:154px;text-align:center;font-size:13.6px;color:#000;font-weight:700;white-space:nowrap;line-height:1;"><span id="t24" style="letter-spacing:-0.158px;">На конец отчетного</span></div>
<div style="position:absolute;left:378px;top:400px;width:154px;text-align:center;font-size:13.6px;color:#000;font-weight:700;white-space:nowrap;line-height:1;"><span id="t25" style="letter-spacing:-0.307px;">периода</span></div>
<div style="position:absolute;left:532px;top:384px;width:133px;text-align:center;font-size:13.6px;color:#000;font-weight:700;white-space:nowrap;line-height:1;"><span id="t26" style="letter-spacing:-0.084px;">На начало года</span></div>
<div style="position:absolute;left:665px;top:384px;width:189px;text-align:center;font-size:13.6px;color:#000;font-weight:700;white-space:nowrap;line-height:1;"><span id="t27" style="letter-spacing:-0.158px;">На конец отчетного</span></div>
<div style="position:absolute;left:665px;top:400px;width:189px;text-align:center;font-size:13.6px;color:#000;font-weight:700;white-space:nowrap;line-height:1;"><span id="t28" style="letter-spacing:-0.307px;">периода</span></div>
<div style="position:absolute;left:854px;top:384px;width:184px;text-align:center;font-size:13.6px;color:#000;font-weight:700;white-space:nowrap;line-height:1;"><span id="t29" style="letter-spacing:-0.158px;">На конец отчетного</span></div>
<div style="position:absolute;left:854px;top:400px;width:184px;text-align:center;font-size:13.6px;color:#000;font-weight:700;white-space:nowrap;line-height:1;"><span id="t30" style="letter-spacing:-0.307px;">периода</span></div>
<div style="position:absolute;left:1038px;top:384px;width:137px;text-align:center;font-size:13.6px;color:#000;font-weight:700;white-space:nowrap;line-height:1;"><span id="t31" style="letter-spacing:-0.607px;">Всего</span></div>
<div style="position:absolute;left:106px;top:417px;font-size:11px;color:#000;font-weight:700;white-space:nowrap;line-height:1;"><span id="t32" style="">Всего</span></div>
<div style="position:absolute;left:248px;top:417px;font-size:11px;color:#000;font-weight:700;white-space:nowrap;line-height:1;"><span id="t33" style="">0</span></div>
<div style="position:absolute;left:381px;top:417px;font-size:11px;color:#000;font-weight:700;white-space:nowrap;line-height:1;"><span id="t34" style="">0</span></div>
<div style="position:absolute;left:535px;top:417px;font-size:11px;color:#000;font-weight:700;white-space:nowrap;line-height:1;"><span id="t35" style="">0</span></div>
<div style="position:absolute;left:668px;top:417px;font-size:11px;color:#000;font-weight:700;white-space:nowrap;line-height:1;"><span id="t36" style="">0</span></div>
<div style="position:absolute;left:857px;top:417px;font-size:11px;color:#000;font-weight:700;white-space:nowrap;line-height:1;"><span id="t37" style="">0</span></div>
<div style="position:absolute;left:1041px;top:417px;font-size:11px;color:#000;font-weight:700;white-space:nowrap;line-height:1;"><span id="t38" style="">0</span></div>
<div style="position:absolute;left:106px;top:432px;font-size:11px;color:#000;font-weight:700;white-space:nowrap;line-height:1;"><span id="t39" style="">Итого по доходам</span></div>
<div style="position:absolute;left:248px;top:432px;font-size:11px;color:#000;font-weight:700;white-space:nowrap;line-height:1;"><span id="t40" style="">0</span></div>
<div style="position:absolute;left:381px;top:432px;font-size:11px;color:#000;font-weight:700;white-space:nowrap;line-height:1;"><span id="t41" style="">0</span></div>
<div style="position:absolute;left:535px;top:432px;font-size:11px;color:#000;font-weight:700;white-space:nowrap;line-height:1;"><span id="t42" style="">0</span></div>
<div style="position:absolute;left:668px;top:432px;font-size:11px;color:#000;font-weight:700;white-space:nowrap;line-height:1;"><span id="t43" style="">0</span></div>
<div style="position:absolute;left:857px;top:432px;font-size:11px;color:#000;font-weight:700;white-space:nowrap;line-height:1;"><span id="t44" style="">0</span></div>
<div style="position:absolute;left:1041px;top:432px;font-size:11px;color:#000;font-weight:700;white-space:nowrap;line-height:1;"><span id="t45" style="">0</span></div>
<div style="position:absolute;left:103px;top:447px;width:140.5px;text-align:right;font-size:11px;color:#000;font-weight:400;white-space:nowrap;line-height:1;"><span id="t46" style="">120</span></div>
<div style="position:absolute;left:248px;top:447px;font-size:11px;color:#000;font-weight:400;white-space:nowrap;line-height:1;"><span id="t47" style="">0</span></div>
<div style="position:absolute;left:381px;top:447px;font-size:11px;color:#000;font-weight:400;white-space:nowrap;line-height:1;"><span id="t48" style="">0</span></div>
<div style="position:absolute;left:535px;top:447px;font-size:11px;color:#000;font-weight:400;white-space:nowrap;line-height:1;"><span id="t49" style="">0</span></div>
<div style="position:absolute;left:668px;top:447px;font-size:11px;color:#000;font-weight:400;white-space:nowrap;line-height:1;"><span id="t50" style="">0</span></div>
<div style="position:absolute;left:857px;top:447px;font-size:11px;color:#000;font-weight:400;white-space:nowrap;line-height:1;"><span id="t51" style="">0</span></div>
<div style="position:absolute;left:1041px;top:447px;font-size:11px;color:#000;font-weight:400;white-space:nowrap;line-height:1;"><span id="t52" style="">0</span></div>
<div style="position:absolute;left:103px;top:462px;width:140.5px;text-align:right;font-size:11px;color:#000;font-weight:400;white-space:nowrap;line-height:1;"><span id="t53" style="">130</span></div>
<div style="position:absolute;left:248px;top:462px;font-size:11px;color:#000;font-weight:400;white-space:nowrap;line-height:1;"><span id="t54" style="">0</span></div>
<div style="position:absolute;left:381px;top:462px;font-size:11px;color:#000;font-weight:400;white-space:nowrap;line-height:1;"><span id="t55" style="">0</span></div>
<div style="position:absolute;left:535px;top:462px;font-size:11px;color:#000;font-weight:400;white-space:nowrap;line-height:1;"><span id="t56" style="">0</span></div>
<div style="position:absolute;left:668px;top:462px;font-size:11px;color:#000;font-weight:400;white-space:nowrap;line-height:1;"><span id="t57" style="">0</span></div>
<div style="position:absolute;left:857px;top:462px;font-size:11px;color:#000;font-weight:400;white-space:nowrap;line-height:1;"><span id="t58" style="">0</span></div>
<div style="position:absolute;left:1041px;top:462px;font-size:11px;color:#000;font-weight:400;white-space:nowrap;line-height:1;"><span id="t59" style="">0</span></div>
<div style="position:absolute;left:103px;top:477px;width:140.5px;text-align:right;font-size:11px;color:#000;font-weight:400;white-space:nowrap;line-height:1;"><span id="t60" style="">140</span></div>
<div style="position:absolute;left:248px;top:477px;font-size:11px;color:#000;font-weight:400;white-space:nowrap;line-height:1;"><span id="t61" style="">0</span></div>
<div style="position:absolute;left:381px;top:477px;font-size:11px;color:#000;font-weight:400;white-space:nowrap;line-height:1;"><span id="t62" style="">0</span></div>
<div style="position:absolute;left:535px;top:477px;font-size:11px;color:#000;font-weight:400;white-space:nowrap;line-height:1;"><span id="t63" style="">0</span></div>
<div style="position:absolute;left:668px;top:477px;font-size:11px;color:#000;font-weight:400;white-space:nowrap;line-height:1;"><span id="t64" style="">0</span></div>
<div style="position:absolute;left:857px;top:477px;font-size:11px;color:#000;font-weight:400;white-space:nowrap;line-height:1;"><span id="t65" style="">0</span></div>
<div style="position:absolute;left:1041px;top:477px;font-size:11px;color:#000;font-weight:400;white-space:nowrap;line-height:1;"><span id="t66" style="">0</span></div>
<div style="position:absolute;left:103px;top:492px;width:140.5px;text-align:right;font-size:11px;color:#000;font-weight:400;white-space:nowrap;line-height:1;"><span id="t67" style="">180</span></div>
<div style="position:absolute;left:248px;top:492px;font-size:11px;color:#000;font-weight:400;white-space:nowrap;line-height:1;"><span id="t68" style="">0</span></div>
<div style="position:absolute;left:381px;top:492px;font-size:11px;color:#000;font-weight:400;white-space:nowrap;line-height:1;"><span id="t69" style="">0</span></div>
<div style="position:absolute;left:535px;top:492px;font-size:11px;color:#000;font-weight:400;white-space:nowrap;line-height:1;"><span id="t70" style="">0</span></div>
<div style="position:absolute;left:668px;top:492px;font-size:11px;color:#000;font-weight:400;white-space:nowrap;line-height:1;"><span id="t71" style="">0</span></div>
<div style="position:absolute;left:857px;top:492px;font-size:11px;color:#000;font-weight:400;white-space:nowrap;line-height:1;"><span id="t72" style="">0</span></div>
<div style="position:absolute;left:1041px;top:492px;font-size:11px;color:#000;font-weight:400;white-space:nowrap;line-height:1;"><span id="t73" style="">0</span></div>
<div style="position:absolute;left:106px;top:507px;font-size:11px;color:#000;font-weight:700;white-space:nowrap;line-height:1;"><span id="t74" style="">Итого по расходам</span></div>
<div style="position:absolute;left:248px;top:507px;font-size:11px;color:#000;font-weight:700;white-space:nowrap;line-height:1;"><span id="t75" style="">0</span></div>
<div style="position:absolute;left:381px;top:507px;font-size:11px;color:#000;font-weight:700;white-space:nowrap;line-height:1;"><span id="t76" style="">0</span></div>
<div style="position:absolute;left:535px;top:507px;font-size:11px;color:#000;font-weight:700;white-space:nowrap;line-height:1;"><span id="t77" style="">0</span></div>
<div style="position:absolute;left:668px;top:507px;font-size:11px;color:#000;font-weight:700;white-space:nowrap;line-height:1;"><span id="t78" style="">0</span></div>
<div style="position:absolute;left:857px;top:507px;font-size:11px;color:#000;font-weight:700;white-space:nowrap;line-height:1;"><span id="t79" style="">0</span></div>
<div style="position:absolute;left:1041px;top:507px;font-size:11px;color:#000;font-weight:700;white-space:nowrap;line-height:1;"><span id="t80" style="">0</span></div>
<div style="position:absolute;left:103px;top:522px;width:140.5px;text-align:right;font-size:11px;color:#000;font-weight:400;white-space:nowrap;line-height:1;"><span id="t81" style="">211</span></div>
<div style="position:absolute;left:248px;top:522px;font-size:11px;color:#000;font-weight:400;white-space:nowrap;line-height:1;"><span id="t82" style="">0</span></div>
<div style="position:absolute;left:381px;top:522px;font-size:11px;color:#000;font-weight:400;white-space:nowrap;line-height:1;"><span id="t83" style="">0</span></div>
<div style="position:absolute;left:535px;top:522px;font-size:11px;color:#000;font-weight:400;white-space:nowrap;line-height:1;"><span id="t84" style="">0</span></div>
<div style="position:absolute;left:668px;top:522px;font-size:11px;color:#000;font-weight:400;white-space:nowrap;line-height:1;"><span id="t85" style="">0</span></div>
<div style="position:absolute;left:857px;top:522px;font-size:11px;color:#000;font-weight:400;white-space:nowrap;line-height:1;"><span id="t86" style="">0</span></div>
<div style="position:absolute;left:1041px;top:522px;font-size:11px;color:#000;font-weight:400;white-space:nowrap;line-height:1;"><span id="t87" style="">0</span></div>
<div style="position:absolute;left:103px;top:537px;width:140.5px;text-align:right;font-size:11px;color:#000;font-weight:400;white-space:nowrap;line-height:1;"><span id="t88" style="">212</span></div>
<div style="position:absolute;left:248px;top:537px;font-size:11px;color:#000;font-weight:400;white-space:nowrap;line-height:1;"><span id="t89" style="">0</span></div>
<div style="position:absolute;left:381px;top:537px;font-size:11px;color:#000;font-weight:400;white-space:nowrap;line-height:1;"><span id="t90" style="">0</span></div>
<div style="position:absolute;left:535px;top:537px;font-size:11px;color:#000;font-weight:400;white-space:nowrap;line-height:1;"><span id="t91" style="">0</span></div>
<div style="position:absolute;left:668px;top:537px;font-size:11px;color:#000;font-weight:400;white-space:nowrap;line-height:1;"><span id="t92" style="">0</span></div>
<div style="position:absolute;left:857px;top:537px;font-size:11px;color:#000;font-weight:400;white-space:nowrap;line-height:1;"><span id="t93" style="">0</span></div>
<div style="position:absolute;left:1041px;top:537px;font-size:11px;color:#000;font-weight:400;white-space:nowrap;line-height:1;"><span id="t94" style="">0</span></div>
<div style="position:absolute;left:103px;top:552px;width:140.5px;text-align:right;font-size:11px;color:#000;font-weight:400;white-space:nowrap;line-height:1;"><span id="t95" style="">213</span></div>
<div style="position:absolute;left:248px;top:552px;font-size:11px;color:#000;font-weight:400;white-space:nowrap;line-height:1;"><span id="t96" style="">0</span></div>
<div style="position:absolute;left:381px;top:552px;font-size:11px;color:#000;font-weight:400;white-space:nowrap;line-height:1;"><span id="t97" style="">0</span></div>
<div style="position:absolute;left:535px;top:552px;font-size:11px;color:#000;font-weight:400;white-space:nowrap;line-height:1;"><span id="t98" style="">0</span></div>
<div style="position:absolute;left:668px;top:552px;font-size:11px;color:#000;font-weight:400;white-space:nowrap;line-height:1;"><span id="t99" style="">0</span></div>
<div style="position:absolute;left:857px;top:552px;font-size:11px;color:#000;font-weight:400;white-space:nowrap;line-height:1;"><span id="t100" style="">0</span></div>
<div style="position:absolute;left:1041px;top:552px;font-size:11px;color:#000;font-weight:400;white-space:nowrap;line-height:1;"><span id="t101" style="">0</span></div>
<div style="position:absolute;left:103px;top:567px;width:140.5px;text-align:right;font-size:11px;color:#000;font-weight:400;white-space:nowrap;line-height:1;"><span id="t102" style="">221</span></div>
<div style="position:absolute;left:248px;top:567px;font-size:11px;color:#000;font-weight:400;white-space:nowrap;line-height:1;"><span id="t103" style="">0</span></div>
<div style="position:absolute;left:381px;top:567px;font-size:11px;color:#000;font-weight:400;white-space:nowrap;line-height:1;"><span id="t104" style="">0</span></div>
<div style="position:absolute;left:535px;top:567px;font-size:11px;color:#000;font-weight:400;white-space:nowrap;line-height:1;"><span id="t105" style="">0</span></div>
<div style="position:absolute;left:668px;top:567px;font-size:11px;color:#000;font-weight:400;white-space:nowrap;line-height:1;"><span id="t106" style="">0</span></div>
<div style="position:absolute;left:857px;top:567px;font-size:11px;color:#000;font-weight:400;white-space:nowrap;line-height:1;"><span id="t107" style="">0</span></div>
<div style="position:absolute;left:1041px;top:567px;font-size:11px;color:#000;font-weight:400;white-space:nowrap;line-height:1;"><span id="t108" style="">0</span></div>
<div style="position:absolute;left:103px;top:582px;width:140.5px;text-align:right;font-size:11px;color:#000;font-weight:400;white-space:nowrap;line-height:1;"><span id="t109" style="">222</span></div>
<div style="position:absolute;left:248px;top:582px;font-size:11px;color:#000;font-weight:400;white-space:nowrap;line-height:1;"><span id="t110" style="">0</span></div>
<div style="position:absolute;left:381px;top:582px;font-size:11px;color:#000;font-weight:400;white-space:nowrap;line-height:1;"><span id="t111" style="">0</span></div>
<div style="position:absolute;left:535px;top:582px;font-size:11px;color:#000;font-weight:400;white-space:nowrap;line-height:1;"><span id="t112" style="">0</span></div>
<div style="position:absolute;left:668px;top:582px;font-size:11px;color:#000;font-weight:400;white-space:nowrap;line-height:1;"><span id="t113" style="">0</span></div>
<div style="position:absolute;left:857px;top:582px;font-size:11px;color:#000;font-weight:400;white-space:nowrap;line-height:1;"><span id="t114" style="">0</span></div>
<div style="position:absolute;left:1041px;top:582px;font-size:11px;color:#000;font-weight:400;white-space:nowrap;line-height:1;"><span id="t115" style="">0</span></div>
<div style="position:absolute;left:103px;top:597px;width:140.5px;text-align:right;font-size:11px;color:#000;font-weight:400;white-space:nowrap;line-height:1;"><span id="t116" style="">223</span></div>
<div style="position:absolute;left:248px;top:597px;font-size:11px;color:#000;font-weight:400;white-space:nowrap;line-height:1;"><span id="t117" style="">0</span></div>
<div style="position:absolute;left:381px;top:597px;font-size:11px;color:#000;font-weight:400;white-space:nowrap;line-height:1;"><span id="t118" style="">0</span></div>
<div style="position:absolute;left:535px;top:597px;font-size:11px;color:#000;font-weight:400;white-space:nowrap;line-height:1;"><span id="t119" style="">0</span></div>
<div style="position:absolute;left:668px;top:597px;font-size:11px;color:#000;font-weight:400;white-space:nowrap;line-height:1;"><span id="t120" style="">0</span></div>
<div style="position:absolute;left:857px;top:597px;font-size:11px;color:#000;font-weight:400;white-space:nowrap;line-height:1;"><span id="t121" style="">0</span></div>
<div style="position:absolute;left:1041px;top:597px;font-size:11px;color:#000;font-weight:400;white-space:nowrap;line-height:1;"><span id="t122" style="">0</span></div>
<div style="position:absolute;left:103px;top:612px;width:140.5px;text-align:right;font-size:11px;color:#000;font-weight:400;white-space:nowrap;line-height:1;"><span id="t123" style="">224</span></div>
<div style="position:absolute;left:248px;top:612px;font-size:11px;color:#000;font-weight:400;white-space:nowrap;line-height:1;"><span id="t124" style="">0</span></div>
<div style="position:absolute;left:381px;top:612px;font-size:11px;color:#000;font-weight:400;white-space:nowrap;line-height:1;"><span id="t125" style="">0</span></div>
<div style="position:absolute;left:535px;top:612px;font-size:11px;color:#000;font-weight:400;white-space:nowrap;line-height:1;"><span id="t126" style="">0</span></div>
<div style="position:absolute;left:668px;top:612px;font-size:11px;color:#000;font-weight:400;white-space:nowrap;line-height:1;"><span id="t127" style="">0</span></div>
<div style="position:absolute;left:857px;top:612px;font-size:11px;color:#000;font-weight:400;white-space:nowrap;line-height:1;"><span id="t128" style="">0</span></div>
<div style="position:absolute;left:1041px;top:612px;font-size:11px;color:#000;font-weight:400;white-space:nowrap;line-height:1;"><span id="t129" style="">0</span></div>
<div style="position:absolute;left:103px;top:627px;width:140.5px;text-align:right;font-size:11px;color:#000;font-weight:400;white-space:nowrap;line-height:1;"><span id="t130" style="">225</span></div>
<div style="position:absolute;left:248px;top:627px;font-size:11px;color:#000;font-weight:400;white-space:nowrap;line-height:1;"><span id="t131" style="">0</span></div>
<div style="position:absolute;left:381px;top:627px;font-size:11px;color:#000;font-weight:400;white-space:nowrap;line-height:1;"><span id="t132" style="">0</span></div>
<div style="position:absolute;left:535px;top:627px;font-size:11px;color:#000;font-weight:400;white-space:nowrap;line-height:1;"><span id="t133" style="">0</span></div>
<div style="position:absolute;left:668px;top:627px;font-size:11px;color:#000;font-weight:400;white-space:nowrap;line-height:1;"><span id="t134" style="">0</span></div>
<div style="position:absolute;left:857px;top:627px;font-size:11px;color:#000;font-weight:400;white-space:nowrap;line-height:1;"><span id="t135" style="">0</span></div>
<div style="position:absolute;left:1041px;top:627px;font-size:11px;color:#000;font-weight:400;white-space:nowrap;line-height:1;"><span id="t136" style="">0</span></div>
<div style="position:absolute;left:103px;top:642px;width:140.5px;text-align:right;font-size:11px;color:#000;font-weight:400;white-space:nowrap;line-height:1;"><span id="t137" style="">226</span></div>
<div style="position:absolute;left:248px;top:642px;font-size:11px;color:#000;font-weight:400;white-space:nowrap;line-height:1;"><span id="t138" style="">0</span></div>
<div style="position:absolute;left:381px;top:642px;font-size:11px;color:#000;font-weight:400;white-space:nowrap;line-height:1;"><span id="t139" style="">0</span></div>
<div style="position:absolute;left:535px;top:642px;font-size:11px;color:#000;font-weight:400;white-space:nowrap;line-height:1;"><span id="t140" style="">0</span></div>
<div style="position:absolute;left:668px;top:642px;font-size:11px;color:#000;font-weight:400;white-space:nowrap;line-height:1;"><span id="t141" style="">0</span></div>
<div style="position:absolute;left:857px;top:642px;font-size:11px;color:#000;font-weight:400;white-space:nowrap;line-height:1;"><span id="t142" style="">0</span></div>
<div style="position:absolute;left:1041px;top:642px;font-size:11px;color:#000;font-weight:400;white-space:nowrap;line-height:1;"><span id="t143" style="">0</span></div>
<div style="position:absolute;left:103px;top:657px;width:140.5px;text-align:right;font-size:11px;color:#000;font-weight:400;white-space:nowrap;line-height:1;"><span id="t144" style="">261</span></div>
<div style="position:absolute;left:248px;top:657px;font-size:11px;color:#000;font-weight:400;white-space:nowrap;line-height:1;"><span id="t145" style="">0</span></div>
<div style="position:absolute;left:381px;top:657px;font-size:11px;color:#000;font-weight:400;white-space:nowrap;line-height:1;"><span id="t146" style="">0</span></div>
<div style="position:absolute;left:535px;top:657px;font-size:11px;color:#000;font-weight:400;white-space:nowrap;line-height:1;"><span id="t147" style="">0</span></div>
<div style="position:absolute;left:668px;top:657px;font-size:11px;color:#000;font-weight:400;white-space:nowrap;line-height:1;"><span id="t148" style="">0</span></div>
<div style="position:absolute;left:857px;top:657px;font-size:11px;color:#000;font-weight:400;white-space:nowrap;line-height:1;"><span id="t149" style="">0</span></div>
<div style="position:absolute;left:1041px;top:657px;font-size:11px;color:#000;font-weight:400;white-space:nowrap;line-height:1;"><span id="t150" style="">0</span></div>
<div style="position:absolute;left:103px;top:672px;width:140.5px;text-align:right;font-size:11px;color:#000;font-weight:400;white-space:nowrap;line-height:1;"><span id="t151" style="">262</span></div>
<div style="position:absolute;left:248px;top:672px;font-size:11px;color:#000;font-weight:400;white-space:nowrap;line-height:1;"><span id="t152" style="">0</span></div>
<div style="position:absolute;left:381px;top:672px;font-size:11px;color:#000;font-weight:400;white-space:nowrap;line-height:1;"><span id="t153" style="">0</span></div>
<div style="position:absolute;left:535px;top:672px;font-size:11px;color:#000;font-weight:400;white-space:nowrap;line-height:1;"><span id="t154" style="">0</span></div>
<div style="position:absolute;left:668px;top:672px;font-size:11px;color:#000;font-weight:400;white-space:nowrap;line-height:1;"><span id="t155" style="">0</span></div>
<div style="position:absolute;left:857px;top:672px;font-size:11px;color:#000;font-weight:400;white-space:nowrap;line-height:1;"><span id="t156" style="">0</span></div>
<div style="position:absolute;left:1041px;top:672px;font-size:11px;color:#000;font-weight:400;white-space:nowrap;line-height:1;"><span id="t157" style="">0</span></div>
<div style="position:absolute;left:103px;top:687px;width:140.5px;text-align:right;font-size:11px;color:#000;font-weight:400;white-space:nowrap;line-height:1;"><span id="t158" style="">263</span></div>
<div style="position:absolute;left:248px;top:687px;font-size:11px;color:#000;font-weight:400;white-space:nowrap;line-height:1;"><span id="t159" style="">0</span></div>
<div style="position:absolute;left:381px;top:687px;font-size:11px;color:#000;font-weight:400;white-space:nowrap;line-height:1;"><span id="t160" style="">0</span></div>
<div style="position:absolute;left:535px;top:687px;font-size:11px;color:#000;font-weight:400;white-space:nowrap;line-height:1;"><span id="t161" style="">0</span></div>
<div style="position:absolute;left:668px;top:687px;font-size:11px;color:#000;font-weight:400;white-space:nowrap;line-height:1;"><span id="t162" style="">0</span></div>
<div style="position:absolute;left:857px;top:687px;font-size:11px;color:#000;font-weight:400;white-space:nowrap;line-height:1;"><span id="t163" style="">0</span></div>
<div style="position:absolute;left:1041px;top:687px;font-size:11px;color:#000;font-weight:400;white-space:nowrap;line-height:1;"><span id="t164" style="">0</span></div>
<div style="position:absolute;left:103px;top:702px;width:140.5px;text-align:right;font-size:11px;color:#000;font-weight:400;white-space:nowrap;line-height:1;"><span id="t165" style="">290</span></div>
<div style="position:absolute;left:248px;top:702px;font-size:11px;color:#000;font-weight:400;white-space:nowrap;line-height:1;"><span id="t166" style="">0</span></div>
<div style="position:absolute;left:381px;top:702px;font-size:11px;color:#000;font-weight:400;white-space:nowrap;line-height:1;"><span id="t167" style="">0</span></div>
<div style="position:absolute;left:535px;top:702px;font-size:11px;color:#000;font-weight:400;white-space:nowrap;line-height:1;"><span id="t168" style="">0</span></div>
<div style="position:absolute;left:668px;top:702px;font-size:11px;color:#000;font-weight:400;white-space:nowrap;line-height:1;"><span id="t169" style="">0</span></div>
<div style="position:absolute;left:857px;top:702px;font-size:11px;color:#000;font-weight:400;white-space:nowrap;line-height:1;"><span id="t170" style="">0</span></div>
<div style="position:absolute;left:1041px;top:702px;font-size:11px;color:#000;font-weight:400;white-space:nowrap;line-height:1;"><span id="t171" style="">0</span></div>
<div style="position:absolute;left:103px;top:717px;width:140.5px;text-align:right;font-size:11px;color:#000;font-weight:400;white-space:nowrap;line-height:1;"><span id="t172" style="">310</span></div>
<div style="position:absolute;left:248px;top:717px;font-size:11px;color:#000;font-weight:400;white-space:nowrap;line-height:1;"><span id="t173" style="">0</span></div>
<div style="position:absolute;left:381px;top:717px;font-size:11px;color:#000;font-weight:400;white-space:nowrap;line-height:1;"><span id="t174" style="">0</span></div>
<div style="position:absolute;left:535px;top:717px;font-size:11px;color:#000;font-weight:400;white-space:nowrap;line-height:1;"><span id="t175" style="">0</span></div>
<div style="position:absolute;left:668px;top:717px;font-size:11px;color:#000;font-weight:400;white-space:nowrap;line-height:1;"><span id="t176" style="">0</span></div>
<div style="position:absolute;left:857px;top:717px;font-size:11px;color:#000;font-weight:400;white-space:nowrap;line-height:1;"><span id="t177" style="">0</span></div>
<div style="position:absolute;left:1041px;top:717px;font-size:11px;color:#000;font-weight:400;white-space:nowrap;line-height:1;"><span id="t178" style="">0</span></div>
<div style="position:absolute;left:103px;top:732px;width:140.5px;text-align:right;font-size:11px;color:#000;font-weight:400;white-space:nowrap;line-height:1;"><span id="t179" style="">340</span></div>
<div style="position:absolute;left:248px;top:732px;font-size:11px;color:#000;font-weight:400;white-space:nowrap;line-height:1;"><span id="t180" style="">0</span></div>
<div style="position:absolute;left:381px;top:732px;font-size:11px;color:#000;font-weight:400;white-space:nowrap;line-height:1;"><span id="t181" style="">0</span></div>
<div style="position:absolute;left:535px;top:732px;font-size:11px;color:#000;font-weight:400;white-space:nowrap;line-height:1;"><span id="t182" style="">0</span></div>
<div style="position:absolute;left:668px;top:732px;font-size:11px;color:#000;font-weight:400;white-space:nowrap;line-height:1;"><span id="t183" style="">0</span></div>
<div style="position:absolute;left:857px;top:732px;font-size:11px;color:#000;font-weight:400;white-space:nowrap;line-height:1;"><span id="t184" style="">0</span></div>
<div style="position:absolute;left:1041px;top:732px;font-size:11px;color:#000;font-weight:400;white-space:nowrap;line-height:1;"><span id="t185" style="">0</span></div>
<div style="position:absolute;left:181px;top:777px;font-size:13.3px;color:#000;font-weight:700;white-space:nowrap;line-height:1;"><span id="t186" style="letter-spacing:-0.122px;">Руководитель</span></div>
<div style="position:absolute;left:854px;top:779px;width:380px;text-align:center;font-size:11px;color:#000;font-weight:400;white-space:nowrap;line-height:1;"><span id="t187" style="">/</span></div>
<div style="position:absolute;left:849px;top:422px;width:195px;height:101px;box-sizing:border-box;border:3px solid #ff0000;border-radius:3px;"></div>
<div style="position:absolute;left:852px;top:426px;width:189px;height:2px;background:#ffc000;"></div>
<div style="position:absolute;left:852px;top:446px;width:189px;height:2px;background:#ffc000;"></div>
<div style="position:absolute;left:852px;top:426px;width:1px;height:22px;background:#ffc000;"></div>
<div style="position:absolute;left:1040px;top:426px;width:1px;height:22px;background:#ffc000;"></div>
</div>
<div style="position:absolute;left:103px;top:259px;width:1518px;height:13px;background:linear-gradient(#ffffff,#fafafa);"></div>
<div style="position:absolute;left:854px;top:259px;width:184px;height:13px;background:linear-gradient(#f3f3f3,#ececec);"></div>
<div style="position:absolute;left:177px;top:259px;width:1px;height:14px;background:#a8a8a8;"></div>
<div style="position:absolute;left:245px;top:259px;width:1px;height:14px;background:#a8a8a8;"></div>
<div style="position:absolute;left:378px;top:259px;width:1px;height:14px;background:#a8a8a8;"></div>
<div style="position:absolute;left:532px;top:259px;width:1px;height:14px;background:#a8a8a8;"></div>
<div style="position:absolute;left:665px;top:259px;width:1px;height:14px;background:#a8a8a8;"></div>
<div style="position:absolute;left:854px;top:259px;width:1px;height:14px;background:#a8a8a8;"></div>
<div style="position:absolute;left:1038px;top:259px;width:1px;height:14px;background:#a8a8a8;"></div>
<div style="position:absolute;left:1175px;top:259px;width:1px;height:14px;background:#a8a8a8;"></div>
<div style="position:absolute;left:1250px;top:259px;width:1px;height:14px;background:#a8a8a8;"></div>
<div style="position:absolute;left:1325px;top:259px;width:1px;height:14px;background:#a8a8a8;"></div>
<div style="position:absolute;left:1401px;top:259px;width:1px;height:14px;background:#a8a8a8;"></div>
<div style="position:absolute;left:1476px;top:259px;width:1px;height:14px;background:#a8a8a8;"></div>
<div style="position:absolute;left:1551px;top:259px;width:1px;height:14px;background:#a8a8a8;"></div>
<div style="position:absolute;left:69px;top:272px;width:1552px;height:1px;background:#a0a0a0;"></div>
<div style="position:absolute;left:103px;top:259px;width:1px;height:14px;background:#a8a8a8;"></div>
<div style="position:absolute;left:103px;top:261px;width:74px;text-align:center;font-size:11px;color:#222;font-weight:400;white-space:nowrap;line-height:1;"><span id="t188" style="">1</span></div>
<div style="position:absolute;left:177px;top:261px;width:68px;text-align:center;font-size:11px;color:#222;font-weight:400;white-space:nowrap;line-height:1;"><span id="t189" style="">2</span></div>
<div style="position:absolute;left:245px;top:261px;width:133px;text-align:center;font-size:11px;color:#222;font-weight:400;white-space:nowrap;line-height:1;"><span id="t190" style="">3</span></div>
<div style="position:absolute;left:378px;top:261px;width:154px;text-align:center;font-size:11px;color:#222;font-weight:400;white-space:nowrap;line-height:1;"><span id="t191" style="">4</span></div>
<div style="position:absolute;left:532px;top:261px;width:133px;text-align:center;font-size:11px;color:#222;font-weight:400;white-space:nowrap;line-height:1;"><span id="t192" style="">5</span></div>
<div style="position:absolute;left:665px;top:261px;width:189px;text-align:center;font-size:11px;color:#222;font-weight:400;white-space:nowrap;line-height:1;"><span id="t193" style="">6</span></div>
<div style="position:absolute;left:854px;top:261px;width:184px;text-align:center;font-size:11px;color:#222;font-weight:400;white-space:nowrap;line-height:1;"><span id="t194" style="">7</span></div>
<div style="position:absolute;left:1038px;top:261px;width:137px;text-align:center;font-size:11px;color:#222;font-weight:400;white-space:nowrap;line-height:1;"><span id="t195" style="">8</span></div>
<div style="position:absolute;left:1175px;top:261px;width:75px;text-align:center;font-size:11px;color:#222;font-weight:400;white-space:nowrap;line-height:1;"><span id="t196" style="">9</span></div>
<div style="position:absolute;left:1250px;top:261px;width:75px;text-align:center;font-size:11px;color:#222;font-weight:400;white-space:nowrap;line-height:1;"><span id="t197" style="">10</span></div>
<div style="position:absolute;left:1325px;top:261px;width:76px;text-align:center;font-size:11px;color:#222;font-weight:400;white-space:nowrap;line-height:1;"><span id="t198" style="">11</span></div>
<div style="position:absolute;left:1401px;top:261px;width:75px;text-align:center;font-size:11px;color:#222;font-weight:400;white-space:nowrap;line-height:1;"><span id="t199" style="">12</span></div>
<div style="position:absolute;left:1476px;top:261px;width:75px;text-align:center;font-size:11px;color:#222;font-weight:400;white-space:nowrap;line-height:1;"><span id="t200" style="">13</span></div>
<div style="position:absolute;left:1551px;top:261px;width:75px;text-align:center;font-size:11px;color:#222;font-weight:400;white-space:nowrap;line-height:1;clip-path:inset(0 5px 0 0);"><span id="t201" style="">14</span></div>
<div style="position:absolute;left:43px;top:260px;width:10px;height:10px;box-sizing:border-box;border:1px solid #a8a8a8;border-radius:2px;background:#fff;"></div>
<div style="position:absolute;left:43px;top:261px;width:10px;text-align:center;font-size:8px;color:#333;line-height:8px">1</div>
<div style="position:absolute;left:56px;top:260px;width:10px;height:10px;box-sizing:border-box;border:1px solid #a8a8a8;border-radius:2px;background:#fff;"></div>
<div style="position:absolute;left:56px;top:261px;width:10px;text-align:center;font-size:8px;color:#333;line-height:8px">2</div>
<div style="position:absolute;left:69px;top:259px;width:1px;height:539px;background:#a0a0a0;"></div>
<div style="position:absolute;left:70px;top:273px;width:33px;height:27px;background:linear-gradient(#ffffff,#fbfbfb);"></div>
<div style="position:absolute;left:69px;top:300px;width:35px;height:1px;background:#a0a0a0;"></div>
<div style="position:absolute;left:70px;top:282px;width:33px;text-align:center;font-size:11px;color:#222;font-weight:400;white-space:nowrap;line-height:1;"><span id="t202" style="">2</span></div>
<div style="position:absolute;left:70px;top:301px;width:33px;height:16px;background:linear-gradient(#ffffff,#fbfbfb);"></div>
<div style="position:absolute;left:69px;top:317px;width:35px;height:1px;background:#a0a0a0;"></div>
<div style="position:absolute;left:70px;top:304px;width:33px;text-align:center;font-size:11px;color:#222;font-weight:400;white-space:nowrap;line-height:1;"><span id="t203" style="">3</span></div>
<div style="position:absolute;left:70px;top:318px;width:33px;height:14px;background:linear-gradient(#ffffff,#fbfbfb);"></div>
<div style="position:absolute;left:69px;top:332px;width:35px;height:1px;background:#a0a0a0;"></div>
<div style="position:absolute;left:70px;top:320px;width:33px;text-align:center;font-size:11px;color:#222;font-weight:400;white-space:nowrap;line-height:1;"><span id="t204" style="">4</span></div>
<div style="position:absolute;left:70px;top:333px;width:33px;height:16px;background:linear-gradient(#ffffff,#fbfbfb);"></div>
<div style="position:absolute;left:69px;top:349px;width:35px;height:1px;background:#a0a0a0;"></div>
<div style="position:absolute;left:70px;top:336px;width:33px;text-align:center;font-size:11px;color:#222;font-weight:400;white-space:nowrap;line-height:1;"><span id="t205" style="">5</span></div>
<div style="position:absolute;left:70px;top:350px;width:33px;height:14px;background:linear-gradient(#ffffff,#fbfbfb);"></div>
<div style="position:absolute;left:69px;top:364px;width:35px;height:1px;background:#a0a0a0;"></div>
<div style="position:absolute;left:70px;top:352px;width:33px;text-align:center;font-size:11px;color:#222;font-weight:400;white-space:nowrap;line-height:1;"><span id="t206" style="">6</span></div>
<div style="position:absolute;left:70px;top:365px;width:33px;height:16px;background:linear-gradient(#ffffff,#fbfbfb);"></div>
<div style="position:absolute;left:69px;top:381px;width:35px;height:1px;background:#a0a0a0;"></div>
<div style="position:absolute;left:70px;top:368px;width:33px;text-align:center;font-size:11px;color:#222;font-weight:400;white-space:nowrap;line-height:1;"><span id="t207" style="">7</span></div>
<div style="position:absolute;left:70px;top:382px;width:33px;height:32px;background:linear-gradient(#ffffff,#fbfbfb);"></div>
<div style="position:absolute;left:69px;top:414px;width:35px;height:1px;background:#a0a0a0;"></div>
<div style="position:absolute;left:70px;top:393px;width:33px;text-align:center;font-size:11px;color:#222;font-weight:400;white-space:nowrap;line-height:1;"><span id="t208" style="">8</span></div>
<div style="position:absolute;left:70px;top:415px;width:33px;height:14px;background:linear-gradient(#ffffff,#fbfbfb);"></div>
<div style="position:absolute;left:69px;top:429px;width:35px;height:1px;background:#a0a0a0;"></div>
<div style="position:absolute;left:70px;top:417px;width:33px;text-align:center;font-size:11px;color:#222;font-weight:400;white-space:nowrap;line-height:1;"><span id="t209" style="">9</span></div>
<div style="position:absolute;left:70px;top:430px;width:33px;height:14px;background:linear-gradient(#f0f0f0,#e4e4e4);"></div>
<div style="position:absolute;left:69px;top:444px;width:35px;height:1px;background:#a0a0a0;"></div>
<div style="position:absolute;left:70px;top:432px;width:33px;text-align:center;font-size:11px;color:#222;font-weight:700;white-space:nowrap;line-height:1;"><span id="t210" style="">10</span></div>
<div style="position:absolute;left:70px;top:445px;width:33px;height:14px;background:linear-gradient(#ffffff,#fbfbfb);"></div>
<div style="position:absolute;left:69px;top:459px;width:35px;height:1px;background:#a0a0a0;"></div>
<div style="position:absolute;left:70px;top:447px;width:33px;text-align:center;font-size:11px;color:#222;font-weight:400;white-space:nowrap;line-height:1;"><span id="t211" style="">11</span></div>
<div style="position:absolute;left:70px;top:460px;width:33px;height:14px;background:linear-gradient(#ffffff,#fbfbfb);"></div>
<div style="position:absolute;left:69px;top:474px;width:35px;height:1px;background:#a0a0a0;"></div>
<div style="position:absolute;left:70px;top:462px;width:33px;text-align:center;font-size:11px;color:#222;font-weight:400;white-space:nowrap;line-height:1;"><span id="t212" style="">12</span></div>
<div style="position:absolute;left:70px;top:475px;width:33px;height:14px;background:linear-gradient(#ffffff,#fbfbfb);"></div>
<div style="position:absolute;left:69px;top:489px;width:35px;height:1px;background:#a0a0a0;"></div>
<div style="position:absolute;left:70px;top:477px;width:33px;text-align:center;font-size:11px;color:#222;font-weight:400;white-space:nowrap;line-height:1;"><span id="t213" style="">13</span></div>
<div style="position:absolute;left:70px;top:490px;width:33px;height:14px;background:linear-gradient(#ffffff,#fbfbfb);"></div>
<div style="position:absolute;left:69px;top:504px;width:35px;height:1px;background:#a0a0a0;"></div>
<div style="position:absolute;left:70px;top:492px;width:33px;text-align:center;font-size:11px;color:#222;font-weight:400;white-space:nowrap;line-height:1;"><span id="t214" style="">14</span></div>
<div style="position:absolute;left:70px;top:505px;width:33px;height:14px;background:linear-gradient(#ffffff,#fbfbfb);"></div>
<div style="position:absolute;left:69px;top:519px;width:35px;height:1px;background:#a0a0a0;"></div>
<div style="position:absolute;left:70px;top:507px;width:33px;text-align:center;font-size:11px;color:#222;font-weight:400;white-space:nowrap;line-height:1;"><span id="t215" style="">15</span></div>
<div style="position:absolute;left:70px;top:520px;width:33px;height:14px;background:linear-gradient(#ffffff,#fbfbfb);"></div>
<div style="position:absolute;left:69px;top:534px;width:35px;height:1px;background:#a0a0a0;"></div>
<div style="position:absolute;left:70px;top:522px;width:33px;text-align:center;font-size:11px;color:#222;font-weight:400;white-space:nowrap;line-height:1;"><span id="t216" style="">16</span></div>
<div style="position:absolute;left:70px;top:535px;width:33px;height:14px;background:linear-gradient(#ffffff,#fbfbfb);"></div>
<div style="position:absolute;left:69px;top:549px;width:35px;height:1px;background:#a0a0a0;"></div>
<div style="position:absolute;left:70px;top:537px;width:33px;text-align:center;font-size:11px;color:#222;font-weight:400;white-space:nowrap;line-height:1;"><span id="t217" style="">17</span></div>
<div style="position:absolute;left:70px;top:550px;width:33px;height:14px;background:linear-gradient(#ffffff,#fbfbfb);"></div>
<div style="position:absolute;left:69px;top:564px;width:35px;height:1px;background:#a0a0a0;"></div>
<div style="position:absolute;left:70px;top:552px;width:33px;text-align:center;font-size:11px;color:#222;font-weight:400;white-space:nowrap;line-height:1;"><span id="t218" style="">18</span></div>
<div style="position:absolute;left:70px;top:565px;width:33px;height:14px;background:linear-gradient(#ffffff,#fbfbfb);"></div>
<div style="position:absolute;left:69px;top:579px;width:35px;height:1px;background:#a0a0a0;"></div>
<div style="position:absolute;left:70px;top:567px;width:33px;text-align:center;font-size:11px;color:#222;font-weight:400;white-space:nowrap;line-height:1;"><span id="t219" style="">19</span></div>
<div style="position:absolute;left:70px;top:580px;width:33px;height:14px;background:linear-gradient(#ffffff,#fbfbfb);"></div>
<div style="position:absolute;left:69px;top:594px;width:35px;height:1px;background:#a0a0a0;"></div>
<div style="position:absolute;left:70px;top:582px;width:33px;text-align:center;font-size:11px;color:#222;font-weight:400;white-space:nowrap;line-height:1;"><span id="t220" style="">20</span></div>
<div style="position:absolute;left:70px;top:595px;width:33px;height:14px;background:linear-gradient(#ffffff,#fbfbfb);"></div>
<div style="position:absolute;left:69px;top:609px;width:35px;height:1px;background:#a0a0a0;"></div>
<div style="position:absolute;left:70px;top:597px;width:33px;text-align:center;font-size:11px;color:#222;font-weight:400;white-space:nowrap;line-height:1;"><span id="t221" style="">21</span></div>
<div style="position:absolute;left:70px;top:610px;width:33px;height:14px;background:linear-gradient(#ffffff,#fbfbfb);"></div>
<div style="position:absolute;left:69px;top:624px;width:35px;height:1px;background:#a0a0a0;"></div>
<div style="position:absolute;left:70px;top:612px;width:33px;text-align:center;font-size:11px;color:#222;font-weight:400;white-space:nowrap;line-height:1;"><span id="t222" style="">22</span></div>
<div style="position:absolute;left:70px;top:625px;width:33px;height:14px;background:linear-gradient(#ffffff,#fbfbfb);"></div>
<div style="position:absolute;left:69px;top:639px;width:35px;height:1px;background:#a0a0a0;"></div>
<div style="position:absolute;left:70px;top:627px;width:33px;text-align:center;font-size:11px;color:#222;font-weight:400;white-space:nowrap;line-height:1;"><span id="t223" style="">23</span></div>
<div style="position:absolute;left:70px;top:640px;width:33px;height:14px;background:linear-gradient(#ffffff,#fbfbfb);"></div>
<div style="position:absolute;left:69px;top:654px;width:35px;height:1px;background:#a0a0a0;"></div>
<div style="position:absolute;left:70px;top:642px;width:33px;text-align:center;font-size:11px;color:#222;font-weight:400;white-space:nowrap;line-height:1;"><span id="t224" style="">24</span></div>
<div style="position:absolute;left:70px;top:655px;width:33px;height:14px;background:linear-gradient(#ffffff,#fbfbfb);"></div>
<div style="position:absolute;left:69px;top:669px;width:35px;height:1px;background:#a0a0a0;"></div>
<div style="position:absolute;left:70px;top:657px;width:33px;text-align:center;font-size:11px;color:#222;font-weight:400;white-space:nowrap;line-height:1;"><span id="t225" style="">25</span></div>
<div style="position:absolute;left:70px;top:670px;width:33px;height:14px;background:linear-gradient(#ffffff,#fbfbfb);"></div>
<div style="position:absolute;left:69px;top:684px;width:35px;height:1px;background:#a0a0a0;"></div>
<div style="position:absolute;left:70px;top:672px;width:33px;text-align:center;font-size:11px;color:#222;font-weight:400;white-space:nowrap;line-height:1;"><span id="t226" style="">26</span></div>
<div style="position:absolute;left:70px;top:685px;width:33px;height:14px;background:linear-gradient(#ffffff,#fbfbfb);"></div>
<div style="position:absolute;left:69px;top:699px;width:35px;height:1px;background:#a0a0a0;"></div>
<div style="position:absolute;left:70px;top:687px;width:33px;text-align:center;font-size:11px;color:#222;font-weight:400;white-space:nowrap;line-height:1;"><span id="t227" style="">27</span></div>
<div style="position:absolute;left:70px;top:700px;width:33px;height:14px;background:linear-gradient(#ffffff,#fbfbfb);"></div>
<div style="position:absolute;left:69px;top:714px;width:35px;height:1px;background:#a0a0a0;"></div>
<div style="position:absolute;left:70px;top:702px;width:33px;text-align:center;font-size:11px;color:#222;font-weight:400;white-space:nowrap;line-height:1;"><span id="t228" style="">28</span></div>
<div style="position:absolute;left:70px;top:715px;width:33px;height:14px;background:linear-gradient(#ffffff,#fbfbfb);"></div>
<div style="position:absolute;left:69px;top:729px;width:35px;height:1px;background:#a0a0a0;"></div>
<div style="position:absolute;left:70px;top:717px;width:33px;text-align:center;font-size:11px;color:#222;font-weight:400;white-space:nowrap;line-height:1;"><span id="t229" style="">29</span></div>
<div style="position:absolute;left:70px;top:730px;width:33px;height:14px;background:linear-gradient(#ffffff,#fbfbfb);"></div>
<div style="position:absolute;left:69px;top:744px;width:35px;height:1px;background:#a0a0a0;"></div>
<div style="position:absolute;left:70px;top:732px;width:33px;text-align:center;font-size:11px;color:#222;font-weight:400;white-space:nowrap;line-height:1;"><span id="t230" style="">30</span></div>
<div style="position:absolute;left:70px;top:745px;width:33px;height:14px;background:linear-gradient(#ffffff,#fbfbfb);"></div>
<div style="position:absolute;left:69px;top:759px;width:35px;height:1px;background:#a0a0a0;"></div>
<div style="position:absolute;left:70px;top:747px;width:33px;text-align:center;font-size:11px;color:#222;font-weight:400;white-space:nowrap;line-height:1;"><span id="t231" style="">31</span></div>
<div style="position:absolute;left:70px;top:760px;width:33px;height:14px;background:linear-gradient(#ffffff,#fbfbfb);"></div>
<div style="position:absolute;left:69px;top:774px;width:35px;height:1px;background:#a0a0a0;"></div>
<div style="position:absolute;left:70px;top:762px;width:33px;text-align:center;font-size:11px;color:#222;font-weight:400;white-space:nowrap;line-height:1;"><span id="t232" style="">32</span></div>
<div style="position:absolute;left:70px;top:775px;width:33px;height:16px;background:linear-gradient(#ffffff,#fbfbfb);"></div>
<div style="position:absolute;left:69px;top:791px;width:35px;height:1px;background:#a0a0a0;"></div>
<div style="position:absolute;left:70px;top:778px;width:33px;text-align:center;font-size:11px;color:#222;font-weight:400;white-space:nowrap;line-height:1;"><span id="t233" style="">33</span></div>
<div style="position:absolute;left:70px;top:792px;width:33px;height:6px;background:linear-gradient(#ffffff,#fbfbfb);"></div>
<div style="position:absolute;left:70px;top:793px;width:33px;height:5px;overflow:hidden"><div style="position:absolute;left:0;top:2px;width:33px;text-align:center;font-size:11px;line-height:1;color:#222">34</div></div>
<div style="position:absolute;left:103px;top:273px;width:1px;height:525px;background:#a0a0a0;"></div>
<div style="position:absolute;left:43px;top:432px;width:10px;height:10px;box-sizing:border-box;border:1px solid #a0a0a0;background:#fff;"></div>
<div style="position:absolute;left:45px;top:436px;width:6px;height:1px;background:#444;"></div>
<div style="position:absolute;left:48px;top:442px;width:1px;height:62px;background:#a0a0a0;"></div>
<div style="position:absolute;left:48px;top:504px;width:21px;height:1px;background:#a0a0a0;"></div>
<div style="position:absolute;left:43px;top:507px;width:10px;height:10px;box-sizing:border-box;border:1px solid #a0a0a0;background:#fff;"></div>
<div style="position:absolute;left:45px;top:511px;width:6px;height:1px;background:#444;"></div>
<div style="position:absolute;left:48px;top:517px;width:1px;height:227px;background:#a0a0a0;"></div>
<div style="position:absolute;left:48px;top:744px;width:21px;height:1px;background:#a0a0a0;"></div>
<svg style="position:absolute;left:1624px;top:266px" width="8" height="6" viewBox="0 0 8 6"><path d="M0.5 5 L4 1 L7.5 5 Z" fill="#555"/></svg>
<div style="position:absolute;left:1624px;top:281px;width:8px;height:494px;border-radius:4px;background:#d4d4d4;"></div>
<div style="position:absolute;left:1624px;top:296px;width:8px;height:450px;border-radius:4px;background:#9b9b9b;"></div>
<svg style="position:absolute;left:1624px;top:784px" width="8" height="6" viewBox="0 0 8 6"><path d="M0.5 1 L4 5 L7.5 1 Z" fill="#555"/></svg>
<svg style="position:absolute;left:49px;top:801px" width="6" height="8" viewBox="0 0 6 8"><path d="M5 0.5 L1 4 L5 7.5 Z" fill="#c0c0c0"/></svg>
<div style="position:absolute;left:63px;top:801px;width:1535px;height:8px;border-radius:4px;background:#d4d4d4;"></div>
<div style="position:absolute;left:63px;top:801px;width:117px;height:8px;border-radius:4px;background:#9b9b9b;"></div>
<svg style="position:absolute;left:1608px;top:801px" width="6" height="8" viewBox="0 0 6 8"><path d="M1 0.5 L5 4 L1 7.5 Z" fill="#555"/></svg>
<div style="position:absolute;left:30.4px;top:837px;font-size:16.4px;color:#1c5cc0;font-weight:400;white-space:nowrap;line-height:1;text-decoration:underline;"><span id="t234" style="letter-spacing:0.013px;">Редактирование показателя</span></div>
<div style="position:absolute;left:39.2px;top:867px;font-size:13.3px;color:#4d4d4d;font-weight:400;white-space:nowrap;line-height:1;"><span id="t235" style="letter-spacing:-0.280px;">Имя показателя:</span></div>
<div style="position:absolute;left:159.7px;top:867px;font-size:13.3px;color:#1c5cc0;font-weight:400;white-space:nowrap;line-height:1;text-decoration:underline;"><span id="t236" style="letter-spacing:-0.502px;">T1_R10C7</span></div>
<div style="position:absolute;left:39.2px;top:898px;font-size:13.3px;color:#4d4d4d;font-weight:400;white-space:nowrap;line-height:1;"><span id="t237" style="letter-spacing:-0.374px;">Способ обработки:</span></div>
<div class="fld" style="left:159px;top:892px;width:250px;height:25px"></div>
<div style="position:absolute;left:387px;top:893px;width:1px;height:23px;background:#bdbdbd;"></div>
<div class="arr" style="left:394px;top:903px"></div>
<div style="position:absolute;left:162.5px;top:898px;font-size:13.3px;color:#222;font-weight:400;white-space:nowrap;line-height:1;"><span id="t238" style="letter-spacing:-0.238px;">Рассчитывается</span></div>
<div style="position:absolute;left:419.4px;top:898px;font-size:13.3px;color:#4d4d4d;font-weight:400;white-space:nowrap;line-height:1;"><span id="t239" style="letter-spacing:-0.398px;">Тип показателя:</span></div>
<div class="fld" style="left:519px;top:892px;width:250px;height:25px"></div>
<div style="position:absolute;left:747px;top:893px;width:1px;height:23px;background:#bdbdbd;"></div>
<div class="arr" style="left:754px;top:903px"></div>
<div style="position:absolute;left:522.4px;top:898px;font-size:13.3px;color:#222;font-weight:400;white-space:nowrap;line-height:1;"><span id="t240" style="letter-spacing:-0.390px;">Число</span></div>
<div class="btn" style="left:779px;top:892px;width:80px;height:24px"></div>
<div style="position:absolute;left:791.6px;top:898px;font-size:13.3px;color:#333;font-weight:400;white-space:nowrap;line-height:1;"><span id="t241" style="letter-spacing:-0.379px;">Записать</span></div>
<div style="position:absolute;left:39.2px;top:933px;font-size:13.3px;color:#4d4d4d;font-weight:400;white-space:nowrap;line-height:1;"><span id="t242" style="letter-spacing:-0.163px;">Формула расчета:</span></div>
<div style="position:absolute;left:159.7px;top:933px;font-size:13.3px;color:#e07a7a;font-weight:700;white-space:nowrap;line-height:1;font-style:italic;text-decoration:underline;"><span id="t243" style="letter-spacing:-0.397px;">T1_R11C7_Нстр1_</span></div>
<div style="position:absolute;left:276.7px;top:933px;font-size:13.3px;color:#222;font-weight:400;white-space:nowrap;line-height:1;"><span id="t244" style="">+</span></div>
<div style="position:absolute;left:284px;top:933px;font-size:13.3px;color:#e07a7a;font-weight:700;white-space:nowrap;line-height:1;font-style:italic;text-decoration:underline;"><span id="t245" style="letter-spacing:-0.463px;">T1_R12C7_Нстр2_</span></div>
<div style="position:absolute;left:401px;top:933px;font-size:13.3px;color:#222;font-weight:400;white-space:nowrap;line-height:1;"><span id="t246" style="">+</span></div>
<div style="position:absolute;left:410.5px;top:933px;font-size:13.3px;color:#e07a7a;font-weight:700;white-space:nowrap;line-height:1;font-style:italic;text-decoration:underline;"><span id="t247" style="letter-spacing:-0.463px;">T1_R13C7_Нстр3_</span></div>
<div style="position:absolute;left:527.5px;top:933px;font-size:13.3px;color:#222;font-weight:400;white-space:nowrap;line-height:1;"><span id="t248" style="">+</span></div>
<div style="position:absolute;left:536.5px;top:933px;font-size:13.3px;color:#e07a7a;font-weight:700;white-space:nowrap;line-height:1;font-style:italic;text-decoration:underline;"><span id="t249" style="letter-spacing:-0.463px;">T1_R14C7_Нстр4_</span></div>
<div class="btn" style="left:1296px;top:926px;width:170px;height:25px"></div>
<div style="position:absolute;left:1308px;top:932px;font-size:13.3px;color:#333;font-weight:400;white-space:nowrap;line-height:1;"><span id="t250" style="letter-spacing:-0.312px;">Редактировать формулу</span></div>
<div class="btn" style="left:1476px;top:926px;width:170px;height:25px;border-color:#c6c6c6;box-shadow:0 1px 0 #c0c0c0"></div>
<svg style="position:absolute;left:1553px;top:931px" width="17" height="16" viewBox="0 0 17 16"><rect x="0.6" y="0.6" width="12.3" height="14.4" rx="1.8" fill="#d6d8da" stroke="#a9b4bf" stroke-width="1.2"/><rect x="0.6" y="0.6" width="12.3" height="2.6" rx="1" fill="#a9b4bf"/><path d="M2.2 4.6 H11.2 M2.2 6.6 H11.2" stroke="#bfcad4" stroke-width="0.9"/><rect x="0.8" y="9" width="6.6" height="6" rx="1.6" fill="#d3d6d9" stroke="#a9b4bf" stroke-width="1.3"/><rect x="9.2" y="8.4" width="6.8" height="6.6" rx="1.8" fill="#d3d6d9" stroke="#a9b4bf" stroke-width="1.3"/><path d="M3 12 H13.8" stroke="#aab6c2" stroke-width="1.5"/></svg>
<div style="position:absolute;left:19.3px;top:976px;font-size:13.3px;color:#4d4d4d;font-weight:400;white-space:nowrap;line-height:1;"><span id="t251" style="letter-spacing:-0.363px;">Всего таблиц:</span></div>
<div style="position:absolute;left:122px;top:976px;font-size:13.3px;color:#333;font-weight:400;white-space:nowrap;line-height:1;"><span id="t252" style="">4</span></div>
</body></html>
